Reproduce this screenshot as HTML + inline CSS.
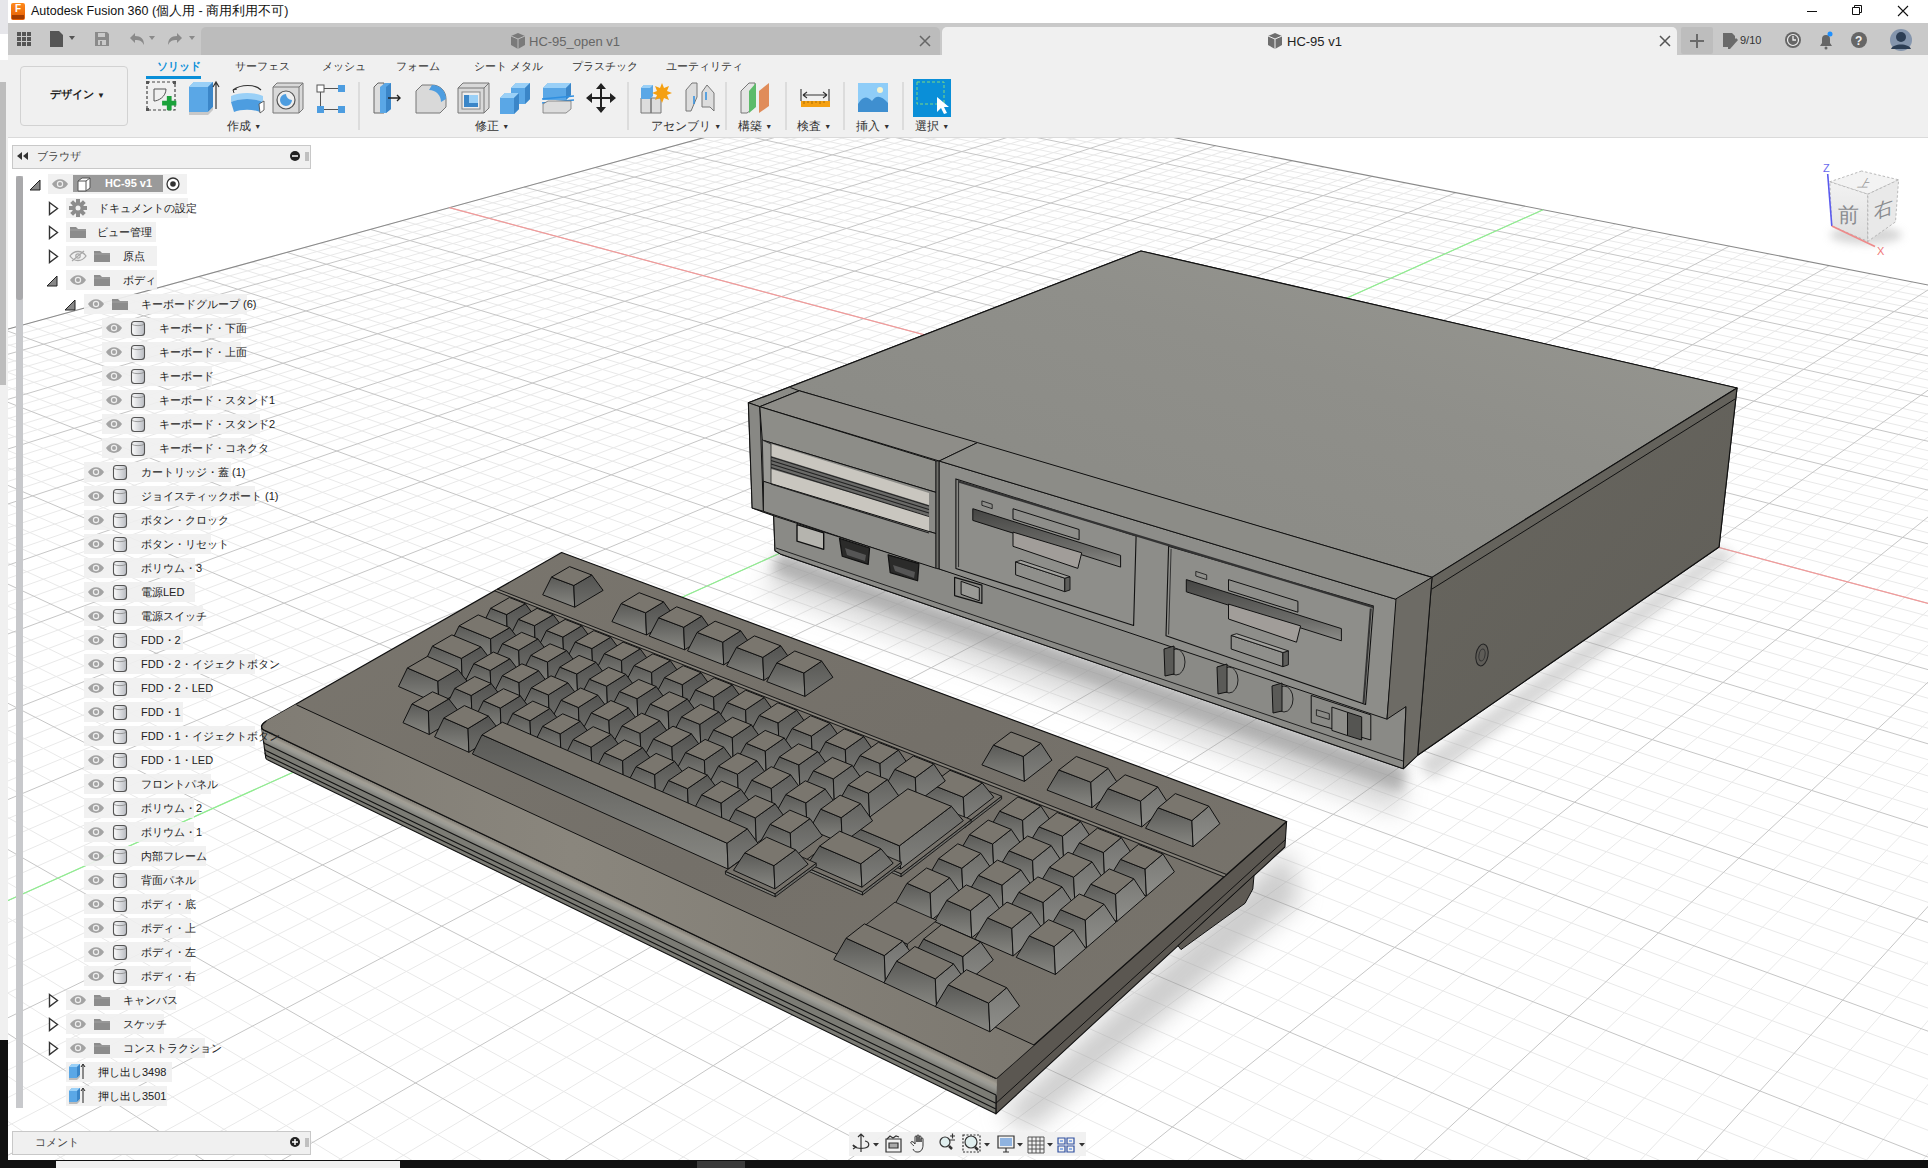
<!DOCTYPE html><html><head><meta charset="utf-8"><style>html,body{margin:0;padding:0;width:1928px;height:1168px;overflow:hidden;background:#fff;position:relative}</style></head><body>
<svg style="position:absolute;left:0;top:0" width="1928" height="1168"><rect x="8" y="137" width="1920" height="1023" fill="#fff"/><path d="M899.4 83.9L-48.8 344.7M912.0 86.4L-49.8 353.4M924.8 88.9L-49.7 361.8M950.5 93.9L-49.3 379.2M963.5 96.4L-49.1 388.2M976.6 99.0L-48.9 397.3M989.8 101.6L-48.7 406.6M1016.5 106.8L-49.7 426.1M1030.0 109.4L-49.5 436.0M1043.7 112.1L-49.3 446.0M1057.4 114.8L-49.1 456.3M1085.1 120.2L-48.7 477.4M1099.2 122.9L-49.9 488.7M1113.4 125.7L-49.7 499.9M1127.6 128.5L-49.5 511.2M1156.5 134.1L-49.1 534.7M1171.1 137.0L-48.9 546.8M1185.9 139.9L-48.7 559.2M1200.7 142.8L-50.0 572.4M1230.8 148.7L-49.6 598.6M1246.0 151.6L-49.3 612.2M1261.4 154.6L-49.1 626.0M1276.8 157.7L-48.9 640.3M1308.2 163.8L-48.4 669.7M1324.0 166.9L-49.8 685.6M1340.0 170.0L-49.6 701.3M1356.2 173.2L-49.3 717.4M1388.8 179.5L-48.8 750.7M1405.4 182.8L-48.6 768.1M1422.1 186.0L-48.3 785.9M1438.9 189.3L-49.9 804.9M1473.0 196.0L-49.4 843.0M1490.3 199.4L-49.1 862.9M1507.7 202.8L-48.8 883.3M1525.3 206.2L-48.5 904.3M1560.9 213.2L-50.0 949.1M1579.0 216.7L-49.7 972.1M1597.2 220.3L-49.4 995.8M1615.6 223.9L-49.1 1020.2M1652.9 231.1L-48.4 1071.4M1671.8 234.8L-48.1 1098.2M1690.8 238.6L-47.7 1125.9M1710.0 242.3L-49.7 1155.8M1749.1 249.9L-49.1 1216.2M1768.8 253.8L4.9 1218.7M1788.8 257.7L61.3 1219.9M1809.0 261.6L120.2 1219.8M1849.8 269.6L237.8 1219.5M1870.6 273.7L296.6 1219.4M1891.5 277.8L355.4 1219.3M1912.6 281.9L414.2 1219.2M1955.5 290.3L531.7 1218.9M1977.3 294.5L590.4 1218.8M1979.9 312.0L647.2 1220.0M1979.8 332.2L706.0 1219.9M1979.6 375.4L823.5 1219.6M1979.5 398.6L882.2 1219.5M1979.9 422.6L940.9 1219.4M1979.8 448.2L999.5 1219.3M1979.5 503.6L1116.9 1219.0M1980.0 533.2L1175.5 1218.9M1979.8 564.9L1234.1 1218.8M1979.7 598.5L1291.3 1220.0M1979.4 672.1L1408.6 1219.7M1979.9 711.8L1467.2 1219.6M1979.8 754.8L1525.8 1219.5M1979.6 800.8L1584.4 1219.4M1979.3 903.1L1701.6 1219.1M1979.9 959.3L1760.1 1219.0M1979.7 1020.9L1818.7 1218.9M1979.5 1087.7L1877.2 1218.7M-49.9 1177.6L8.7 1219.8M-48.9 1129.1L80.3 1219.7M-49.4 1082.3L151.8 1219.5M-49.9 1038.0L223.3 1219.3M-49.5 956.9L366.2 1219.0M-50.0 919.0L439.5 1219.9M-49.1 883.6L510.9 1219.7M-49.6 849.1L582.4 1219.5M-49.2 785.6L725.2 1219.2M-49.6 755.6L796.6 1219.0M-48.9 727.5L870.0 1219.9M-49.3 699.9L941.4 1219.8M-49.0 648.8L1084.0 1219.4M-49.4 624.4L1155.3 1219.2M-49.7 601.1L1226.6 1219.0M-49.1 579.1L1300.2 1220.0M-49.8 536.6L1442.8 1219.6M-49.2 516.9L1514.0 1219.4M-49.5 497.5L1585.2 1219.3M-49.8 478.7L1656.4 1219.1M-49.5 443.6L1801.4 1219.8M-49.8 426.7L1872.6 1219.7M-49.3 410.7L1943.7 1219.5M-49.6 394.8L1979.1 1205.0M-49.3 364.9L1978.4 1149.8M-49.6 350.5L1978.1 1123.5M-36.9 341.5L1977.8 1097.9M-15.9 335.7L1977.5 1073.2M25.3 324.4L1979.4 1026.6M45.5 318.8L1979.1 1003.9M65.4 313.3L1978.7 981.8M85.1 307.9L1978.5 960.3M123.8 297.3L1977.9 919.1M142.8 292.0L1979.9 900.1M161.6 286.9L1979.6 880.8M180.1 281.8L1979.3 862.0M216.6 271.8L1978.7 825.8M234.4 266.8L1978.5 808.4M252.1 262.0L1978.2 791.4M269.6 257.2L1977.9 774.9M304.0 247.7L1979.5 743.5M320.9 243.1L1979.2 728.1M337.6 238.5L1979.0 713.0M354.1 233.9L1978.7 698.3M386.5 225.0L1978.2 669.9M402.5 220.6L1979.9 656.6M418.3 216.3L1979.6 643.2M433.9 212.0L1979.4 630.0M464.6 203.5L1978.9 604.5M479.8 199.4L1978.7 592.1M494.7 195.2L1978.5 580.1M509.5 191.2L1978.3 568.2M538.6 183.2L1979.6 545.7M553.0 179.2L1979.3 534.5M567.1 175.3L1979.1 523.6M581.2 171.5L1978.9 512.9M608.8 163.9L1978.5 492.1M622.4 160.1L1979.9 482.3M635.9 156.4L1979.7 472.4M649.2 152.7L1979.5 462.7M675.5 145.5L1979.1 443.7M688.4 142.0L1978.9 434.5M701.2 138.4L1978.7 425.5M713.9 134.9L1978.5 416.6M738.9 128.1L1979.6 399.6M751.2 124.7L1979.4 391.2M763.4 121.3L1979.2 382.9M775.5 118.0L1979.0 374.7M799.3 111.5L1978.7 358.8M811.0 108.2L1979.9 351.4M822.7 105.0L1979.7 343.8M834.2 101.9L1979.5 336.3M856.9 95.6L1979.2 321.6M868.1 92.5L1979.0 314.5M879.2 89.5L1978.8 307.5M890.2 86.5L1978.7 300.6" stroke="#e9e9e9" stroke-width="1" fill="none"/>
<path d="M937.6 91.4L-49.5 370.5M1003.1 104.2L-49.9 416.5M1071.2 117.5L-48.9 466.7M1142.0 131.3L-49.3 522.8M1215.7 145.7L-49.8 585.3M1292.4 160.7L-48.6 654.8M1372.4 176.3L-49.1 733.8M1455.9 192.6L-49.6 823.7M1543.1 209.7L-48.2 925.9M1634.1 227.5L-48.8 1045.4M1729.5 246.1L-49.4 1185.5M1829.3 265.6L179.0 1219.7M1934.0 286.1L473.0 1219.0M1979.7 353.3L764.7 1219.7M1979.7 475.2L1058.2 1219.1M1979.6 634.2L1350.0 1219.8M1979.4 850.1L1643.0 1219.2M1979.3 1160.4L1934.7 1219.9M-49.0 996.8L294.8 1219.1M-50.0 816.3L653.8 1219.4M-49.7 673.6L1012.7 1219.6M-49.4 557.4L1371.5 1219.8M-49.2 461.0L1727.6 1218.9M-49.9 379.5L1978.8 1177.0M4.8 330.0L1979.7 1050.0M104.6 302.6L1978.2 939.4M198.4 276.7L1979.0 843.7M286.9 252.4L1979.7 759.3M370.4 229.4L1978.5 683.9M449.4 207.7L1979.2 617.1M524.1 187.1L1979.8 557.0M595.1 167.6L1978.7 502.4M662.4 149.1L1979.3 453.1M726.5 131.5L1979.8 408.2M787.5 114.7L1978.9 366.7M845.6 98.7L1979.4 328.9" stroke="#c6c6c6" stroke-width="1" fill="none"/>
<path d="M899.4 83.9L-48.8 344.7" stroke="#8a8a8a" stroke-width="1.1" fill="none"/>
<path d="M899.4 83.9L1980.0 295.1" stroke="#8a8a8a" stroke-width="1.1" fill="none"/>
<path d="M449.4 207.7L1979.2 617.1" stroke="#f39a9a" stroke-width="1.2" fill="none"/>
<path d="M1543.1 209.7L-48.2 925.9" stroke="#8ef08e" stroke-width="1.2" fill="none"/><defs>
<filter id="blur12" x="-50%" y="-50%" width="200%" height="200%"><feGaussianBlur stdDeviation="12"/></filter>
<filter id="blur6" x="-50%" y="-50%" width="200%" height="200%"><feGaussianBlur stdDeviation="6"/></filter>
<linearGradient id="pctop" x1="0" y1="1" x2="1" y2="0"><stop offset="0" stop-color="#888883"/><stop offset="0.6" stop-color="#8f8f8a"/><stop offset="1" stop-color="#989892"/></linearGradient>
<linearGradient id="pcright" x1="0" y1="0" x2="1" y2="1"><stop offset="0" stop-color="#68665f"/><stop offset="1" stop-color="#605e58"/></linearGradient>
<linearGradient id="slot" x1="0" y1="0" x2="0" y2="1"><stop offset="0" stop-color="#454543"/><stop offset="0.7" stop-color="#6e6e6b"/><stop offset="1" stop-color="#8c8c88"/></linearGradient>
<linearGradient id="kbtop" x1="0" y1="0" x2="1" y2="1"><stop offset="0" stop-color="#7a766e"/><stop offset="0.5" stop-color="#747069"/><stop offset="1" stop-color="#78746c"/></linearGradient>
<linearGradient id="kbpalm" x1="0" y1="0" x2="1" y2="0"><stop offset="0" stop-color="#807c74"/><stop offset="0.4" stop-color="#8a867d"/><stop offset="1" stop-color="#7c7870"/></linearGradient>
<linearGradient id="kf" x1="0" y1="0" x2="0" y2="1"><stop offset="0" stop-color="#5a5a57"/><stop offset="1" stop-color="#878782"/></linearGradient>
<linearGradient id="kr" x1="0" y1="0" x2="0" y2="1"><stop offset="0" stop-color="#535351"/><stop offset="1" stop-color="#6e6e6a"/></linearGradient><linearGradient id="kr0" x1="0" y1="0" x2="0" y2="1"><stop offset="0" stop-color="#535351"/><stop offset="1" stop-color="#6e6e6a"/></linearGradient><linearGradient id="kr1" x1="0" y1="0" x2="0" y2="1"><stop offset="0" stop-color="#595956"/><stop offset="1" stop-color="#73736f"/></linearGradient><linearGradient id="kr2" x1="0" y1="0" x2="0" y2="1"><stop offset="0" stop-color="#5e5e5c"/><stop offset="1" stop-color="#777773"/></linearGradient><linearGradient id="kr3" x1="0" y1="0" x2="0" y2="1"><stop offset="0" stop-color="#646461"/><stop offset="1" stop-color="#7c7c78"/></linearGradient><linearGradient id="kr4" x1="0" y1="0" x2="0" y2="1"><stop offset="0" stop-color="#696966"/><stop offset="1" stop-color="#80807c"/></linearGradient><linearGradient id="kr5" x1="0" y1="0" x2="0" y2="1"><stop offset="0" stop-color="#6f6f6b"/><stop offset="1" stop-color="#858581"/></linearGradient><linearGradient id="kr6" x1="0" y1="0" x2="0" y2="1"><stop offset="0" stop-color="#747471"/><stop offset="1" stop-color="#898985"/></linearGradient><linearGradient id="kr7" x1="0" y1="0" x2="0" y2="1"><stop offset="0" stop-color="#7a7a76"/><stop offset="1" stop-color="#8e8e8a"/></linearGradient>
<linearGradient id="fillet" x1="0" y1="0" x2="0" y2="1"><stop offset="0" stop-color="#8a867d"/><stop offset="0.45" stop-color="#a29e95"/><stop offset="1" stop-color="#7d7d76"/></linearGradient>
</defs><polygon points="780.0,552.0 1406.0,768.0 1402.0,792.0 772.0,572.0" fill="#8a8a8a" filter="url(#blur6)" opacity="0.6"/>
<polygon points="780.0,556.0 1406.0,771.0 1400.0,815.0 765.0,590.0" fill="#a0a0a0" filter="url(#blur12)" opacity="0.4"/>
<polygon points="1418.0,762.0 1719.0,547.0 1735.0,555.0 1432.0,780.0" fill="#a8a8a8" filter="url(#blur6)" opacity="0.45"/>
<polygon points="1000.0,1115.0 1289.0,848.0 1300.0,900.0 1030.0,1130.0" fill="#999" filter="url(#blur12)" opacity="0.5"/><polygon points="748.4,402.8 1141.0,251.0 1737.0,388.0 1719.0,547.0 1417.6,755.2 1403.3,768.7 780.6,554.1 775.0,550.7 773.7,515.8 752.2,508.0" fill="#8b8b86" stroke="#111" stroke-width="1.2" stroke-linejoin="round" />
<polygon points="748.4,402.8 1141.0,251.0 1737.0,388.0 1432.0,577.4 799.3,390.8 759.8,406.7" fill="url(#pctop)" stroke="#111" stroke-width="1.1" stroke-linejoin="round" />
<polygon points="1432.0,577.4 1737.0,388.0 1719.0,547.0 1417.6,755.2" fill="url(#pcright)" stroke="#111" stroke-width="1.1" stroke-linejoin="round" />
<line x1="1432.0" y1="589.0" x2="1735.0" y2="399.0" stroke="#111" stroke-width="1.0"/>
<ellipse cx="1482" cy="655" rx="6" ry="11" fill="#5e5c57" stroke="#222" stroke-width="1" transform="rotate(10 1482 655)"/>
<ellipse cx="1482" cy="655" rx="3" ry="6" fill="none" stroke="#333" stroke-width="1" transform="rotate(10 1482 655)"/>
<polygon points="748.4,402.8 759.8,406.7 763.4,511.3 752.2,508.0" fill="#888884" stroke="#111" stroke-width="1" stroke-linejoin="round" />
<line x1="790.3" y1="387.5" x2="799.3" y2="390.8" stroke="#111" stroke-width="1.0"/>
<polygon points="759.8,406.7 799.3,390.8 977.5,442.6 939.2,461.0" fill="#8e8d88" stroke="#111" stroke-width="1" stroke-linejoin="round" />
<polygon points="759.8,406.7 936.0,461.0 936.0,492.4 762.3,440.1" fill="#8d8d88" stroke="#111" stroke-width="1" stroke-linejoin="round" />
<polygon points="762.3,440.1 936.0,492.4 936.0,533.6 763.4,481.3" fill="#8a8a86" stroke="#111" stroke-width="1" stroke-linejoin="round" />
<polygon points="771.0,444.0 929.0,493.0 929.0,533.0 771.0,484.0" fill="#c9c6bf" />
<polygon points="771.0,456.0 929.0,505.0 929.0,516.0 771.0,469.0" fill="#6a6a68" />
<line x1="771.0" y1="457.0" x2="929.0" y2="506.0" stroke="#222" stroke-width="1.1"/>
<line x1="771.0" y1="460.5" x2="929.0" y2="509.5" stroke="#222" stroke-width="1.1"/>
<line x1="771.0" y1="464.0" x2="929.0" y2="513.0" stroke="#222" stroke-width="1.1"/>
<line x1="771.0" y1="467.5" x2="929.0" y2="516.5" stroke="#222" stroke-width="1.1"/>
<polygon points="762.3,440.1 771.0,444.0 771.0,484.0 763.4,481.3" fill="#9a9a96" stroke="#222" stroke-width="0.8" stroke-linejoin="round" />
<polygon points="763.4,481.3 936.0,533.6 936.0,569.0 763.4,511.3" fill="#8c8c88" stroke="#111" stroke-width="1" stroke-linejoin="round" />
<line x1="771.0" y1="484.0" x2="929.0" y2="533.0" stroke="#222" stroke-width="1.2"/>
<polygon points="936.0,461.0 939.2,461.0 939.2,569.0 936.0,569.0" fill="#6e6e6a" stroke="#111" stroke-width="0.8" stroke-linejoin="round" />
<polygon points="773.7,515.8 936.7,568.5 939.2,569.0 1406.0,706.6 1403.3,768.7 780.6,554.1 775.0,550.7" fill="#8a8a86" stroke="#111" stroke-width="1" stroke-linejoin="round" />
<line x1="776.0" y1="548.0" x2="1403.0" y2="761.0" stroke="#222" stroke-width="1.0"/>
<polygon points="797.0,524.7 823.7,532.9 823.7,549.3 797.0,541.1" fill="#b5b4ae" stroke="#111" stroke-width="1.4" stroke-linejoin="round" />
<polygon points="839.5,538.4 869.6,548.0 868.2,564.4 842.2,556.2" fill="#2b2b2a" stroke="#111" stroke-width="1.2" stroke-linejoin="round" />
<polygon points="845.0,548.0 866.0,555.0 865.0,561.0 847.0,555.0" fill="#555" />
<polygon points="888.1,554.8 918.9,563.6 917.6,580.8 890.2,572.6" fill="#2b2b2a" stroke="#111" stroke-width="1.2" stroke-linejoin="round" />
<polygon points="893.0,565.0 915.0,572.0 914.0,578.0 895.0,571.0" fill="#555" />
<polygon points="939.2,461.0 1396.7,599.5 1387.0,719.2 939.2,569.0" fill="#8d8d89" stroke="#111" stroke-width="1" stroke-linejoin="round" />
<polygon points="977.5,442.6 1432.0,577.4 1396.7,599.5 939.2,461.0" fill="#8c8c87" stroke="#111" stroke-width="1" stroke-linejoin="round" />
<polygon points="1396.0,598.8 1432.0,577.4 1417.6,755.2 1403.3,768.7 1406.0,706.6 1387.0,719.2" fill="#6d6b65" stroke="#111" stroke-width="1" stroke-linejoin="round" />
<polygon points="955.9,478.9 1136.1,535.9 1133.6,625.4 955.9,568.4" fill="#8e8e8a" stroke="#111" stroke-width="1.1" stroke-linejoin="round" />
<polygon points="1168.6,546.3 1373.4,606.0 1365.6,704.5 1166.0,635.8" fill="#8e8e8a" stroke="#111" stroke-width="1.1" stroke-linejoin="round" />
<line x1="958.5" y1="481.5" x2="1373.4" y2="607.2" stroke="#333" stroke-width="2.2"/>
<line x1="958.5" y1="478.9" x2="958.5" y2="567.1" stroke="#333" stroke-width="1.2"/>
<line x1="1171.1" y1="548.9" x2="1168.6" y2="634.5" stroke="#333" stroke-width="1.0"/>
<line x1="1370.8" y1="608.5" x2="1363.5" y2="703.2" stroke="#333" stroke-width="2.0"/>
<polygon points="981.9,500.9 992.2,504.3 992.2,508.7 981.9,505.3" fill="#8e8e8a" stroke="#111" stroke-width="0.8" stroke-linejoin="round" />
<polygon points="972.8,508.7 1120.6,555.4 1120.6,567.1 972.8,520.4" fill="url(#slot)" stroke="#111" stroke-width="1" stroke-linejoin="round" />
<polygon points="1013.0,508.7 1079.1,529.5 1079.1,539.8 1013.0,519.1" fill="#8e8e8a" stroke="#111" stroke-width="1" stroke-linejoin="round" />
<polygon points="1013.0,532.1 1081.7,552.8 1077.8,568.4 1013.0,546.3" fill="#a19d99" stroke="#111" stroke-width="1" stroke-linejoin="round" />
<polygon points="1015.6,561.9 1064.8,578.2 1064.8,591.7 1015.6,574.8" fill="#8f8f8b" stroke="#111" stroke-width="1" stroke-linejoin="round" />
<polygon points="1064.8,578.2 1070.0,576.7 1070.0,589.9 1064.8,591.7" fill="#5e5e5b" stroke="#111" stroke-width="0.9" stroke-linejoin="round" />
<polygon points="1015.6,561.9 1020.8,560.3 1070.0,576.7 1064.8,578.2" fill="#a2a29e" stroke="#111" stroke-width="0.9" stroke-linejoin="round" />
<polygon points="1195.8,571.4 1206.7,574.9 1206.7,579.6 1195.8,576.0" fill="#8e8e8a" stroke="#111" stroke-width="0.8" stroke-linejoin="round" />
<polygon points="1186.3,579.6 1341.4,628.6 1341.4,640.8 1186.3,591.8" fill="url(#slot)" stroke="#111" stroke-width="1" stroke-linejoin="round" />
<polygon points="1228.5,579.6 1297.9,601.3 1297.9,612.2 1228.5,590.5" fill="#8e8e8a" stroke="#111" stroke-width="1" stroke-linejoin="round" />
<polygon points="1228.5,604.1 1300.6,625.9 1296.5,642.2 1228.5,619.0" fill="#a19d99" stroke="#111" stroke-width="1" stroke-linejoin="round" />
<polygon points="1231.2,635.4 1282.9,652.5 1282.9,666.7 1231.2,649.0" fill="#8f8f8b" stroke="#111" stroke-width="1" stroke-linejoin="round" />
<polygon points="1282.9,652.5 1288.4,650.9 1288.4,664.8 1282.9,666.7" fill="#5e5e5b" stroke="#111" stroke-width="0.9" stroke-linejoin="round" />
<polygon points="1231.2,635.4 1236.6,633.7 1288.4,650.9 1282.9,652.5" fill="#a2a29e" stroke="#111" stroke-width="0.9" stroke-linejoin="round" />
<ellipse cx="1176" cy="662" rx="9" ry="13" fill="#8a8a86" stroke="#222" stroke-width="1"/>
<polygon points="1164.0,649.0 1174.0,646.0 1174.0,674.0 1165.0,676.0" fill="#5a5a57" stroke="#111" stroke-width="1" stroke-linejoin="round" />
<ellipse cx="1229" cy="680" rx="9" ry="13" fill="#8a8a86" stroke="#222" stroke-width="1"/>
<polygon points="1217.0,667.0 1227.0,664.0 1227.0,692.0 1218.0,694.0" fill="#5a5a57" stroke="#111" stroke-width="1" stroke-linejoin="round" />
<ellipse cx="1284" cy="699" rx="9" ry="13" fill="#8a8a86" stroke="#222" stroke-width="1"/>
<polygon points="1272.0,686.0 1282.0,683.0 1282.0,711.0 1273.0,713.0" fill="#5a5a57" stroke="#111" stroke-width="1" stroke-linejoin="round" />
<polygon points="954.6,577.4 981.9,585.2 981.9,603.4 954.6,595.6" fill="#8a8a86" stroke="#111" stroke-width="1.2" stroke-linejoin="round" />
<polygon points="961.1,581.3 979.3,587.8 979.3,600.8 961.1,594.3" fill="#9a9a96" stroke="#111" stroke-width="1" stroke-linejoin="round" />
<polygon points="1311.2,695.4 1370.8,714.9 1370.8,740.0 1311.2,722.6" fill="#8a8a86" stroke="#111" stroke-width="1" stroke-linejoin="round" />
<polygon points="1316.4,709.7 1329.3,713.6 1329.3,719.5 1316.4,715.6" fill="#8a8a86" stroke="#111" stroke-width="0.8" stroke-linejoin="round" />
<polygon points="1331.9,707.1 1347.5,712.3 1347.5,735.6 1331.9,730.4" fill="#8e8e8a" stroke="#111" stroke-width="1" stroke-linejoin="round" />
<polygon points="1347.5,712.3 1361.7,716.9 1361.7,740.0 1347.5,735.6" fill="#555552" stroke="#111" stroke-width="1" stroke-linejoin="round" /><polygon points="996.1,1078.5 1286.6,821.5 1284.9,847.0 995.9,1113.8" fill="#5b5751" stroke="#111" stroke-width="1.1" stroke-linejoin="round" />
<line x1="995.9" y1="1103.3" x2="1285.4" y2="839.6" stroke="#111" stroke-width="1.0"/>
<polygon points="1254.0,875.5 1252.8,889.0 1245.0,903.3 1181.0,949.6 1178.0,945.7" fill="#5e5a54" stroke="#111" stroke-width="1" stroke-linejoin="round" />
<polygon points="261.5,726.6 261.6,727.6 262.1,728.6 262.8,729.4 264.0,730.1 996.1,1078.5 995.9,1113.8 268.0,760.1 266.9,759.4 266.1,758.6 265.7,757.7 265.6,756.8" fill="#7b7b74" stroke="#111" stroke-width="1.1" stroke-linejoin="round" />
<polygon points="261.5,726.6 261.6,727.6 262.1,728.6 262.8,729.4 264.0,730.1 996.1,1078.5 996.0,1095.0 265.8,744.1 264.7,743.4 263.9,742.6 263.5,741.8 263.5,740.8" fill="#86827a" />
<linearGradient id="fg0" gradientUnits="userSpaceOnUse" x1="288.8" y1="741.9" x2="283.6" y2="752.7"><stop offset="0" stop-color="#7e7a72"/><stop offset="0.35" stop-color="#a29e94"/><stop offset="0.6" stop-color="#9a9a94"/><stop offset="1" stop-color="#7a7a74"/></linearGradient>
<polygon points="264.0,730.1 313.5,753.7 315.3,767.9 265.8,744.1" fill="url(#fg0)" />
<linearGradient id="fg1" gradientUnits="userSpaceOnUse" x1="338.7" y1="765.7" x2="333.5" y2="776.6"><stop offset="0" stop-color="#7e7a72"/><stop offset="0.35" stop-color="#a29e94"/><stop offset="0.6" stop-color="#9a9a94"/><stop offset="1" stop-color="#7a7a74"/></linearGradient>
<polygon points="313.0,753.4 364.4,777.9 366.0,792.2 314.8,767.6" fill="url(#fg1)" />
<linearGradient id="fg2" gradientUnits="userSpaceOnUse" x1="390.5" y1="790.3" x2="385.1" y2="801.4"><stop offset="0" stop-color="#7e7a72"/><stop offset="0.35" stop-color="#a29e94"/><stop offset="0.6" stop-color="#9a9a94"/><stop offset="1" stop-color="#7a7a74"/></linearGradient>
<polygon points="363.8,777.6 417.1,803.0 418.6,817.5 365.5,792.0" fill="url(#fg2)" />
<linearGradient id="fg3" gradientUnits="userSpaceOnUse" x1="444.2" y1="815.8" x2="438.7" y2="827.2"><stop offset="0" stop-color="#7e7a72"/><stop offset="0.35" stop-color="#a29e94"/><stop offset="0.6" stop-color="#9a9a94"/><stop offset="1" stop-color="#7a7a74"/></linearGradient>
<polygon points="416.5,802.7 471.8,829.0 473.2,843.7 418.1,817.2" fill="url(#fg3)" />
<linearGradient id="fg4" gradientUnits="userSpaceOnUse" x1="499.9" y1="842.4" x2="494.4" y2="854.0"><stop offset="0" stop-color="#7e7a72"/><stop offset="0.35" stop-color="#a29e94"/><stop offset="0.6" stop-color="#9a9a94"/><stop offset="1" stop-color="#7a7a74"/></linearGradient>
<polygon points="471.2,828.7 528.6,856.0 529.9,871.0 472.6,843.4" fill="url(#fg4)" />
<linearGradient id="fg5" gradientUnits="userSpaceOnUse" x1="557.8" y1="869.9" x2="552.2" y2="881.7"><stop offset="0" stop-color="#7e7a72"/><stop offset="0.35" stop-color="#a29e94"/><stop offset="0.6" stop-color="#9a9a94"/><stop offset="1" stop-color="#7a7a74"/></linearGradient>
<polygon points="528.0,855.7 587.6,884.1 588.8,899.3 529.3,870.7" fill="url(#fg5)" />
<linearGradient id="fg6" gradientUnits="userSpaceOnUse" x1="618.0" y1="898.6" x2="612.3" y2="910.6"><stop offset="0" stop-color="#7e7a72"/><stop offset="0.35" stop-color="#a29e94"/><stop offset="0.6" stop-color="#9a9a94"/><stop offset="1" stop-color="#7a7a74"/></linearGradient>
<polygon points="587.0,883.8 649.0,913.3 650.0,928.7 588.1,899.0" fill="url(#fg6)" />
<linearGradient id="fg7" gradientUnits="userSpaceOnUse" x1="680.7" y1="928.4" x2="674.8" y2="940.7"><stop offset="0" stop-color="#7e7a72"/><stop offset="0.35" stop-color="#a29e94"/><stop offset="0.6" stop-color="#9a9a94"/><stop offset="1" stop-color="#7a7a74"/></linearGradient>
<polygon points="648.4,913.0 712.9,943.7 713.7,959.3 649.3,928.4" fill="url(#fg7)" />
<linearGradient id="fg8" gradientUnits="userSpaceOnUse" x1="745.9" y1="959.4" x2="739.9" y2="971.9"><stop offset="0" stop-color="#7e7a72"/><stop offset="0.35" stop-color="#a29e94"/><stop offset="0.6" stop-color="#9a9a94"/><stop offset="1" stop-color="#7a7a74"/></linearGradient>
<polygon points="712.2,943.4 779.5,975.4 780.1,991.2 713.0,959.0" fill="url(#fg8)" />
<linearGradient id="fg9" gradientUnits="userSpaceOnUse" x1="813.8" y1="991.8" x2="807.8" y2="1004.6"><stop offset="0" stop-color="#7e7a72"/><stop offset="0.35" stop-color="#a29e94"/><stop offset="0.6" stop-color="#9a9a94"/><stop offset="1" stop-color="#7a7a74"/></linearGradient>
<polygon points="778.8,975.1 848.9,1008.4 849.3,1024.5 779.4,990.9" fill="url(#fg9)" />
<linearGradient id="fg10" gradientUnits="userSpaceOnUse" x1="884.7" y1="1025.5" x2="878.5" y2="1038.6"><stop offset="0" stop-color="#7e7a72"/><stop offset="0.35" stop-color="#a29e94"/><stop offset="0.6" stop-color="#9a9a94"/><stop offset="1" stop-color="#7a7a74"/></linearGradient>
<polygon points="848.1,1008.1 921.3,1042.9 921.5,1059.2 848.5,1024.1" fill="url(#fg10)" />
<linearGradient id="fg11" gradientUnits="userSpaceOnUse" x1="958.7" y1="1060.7" x2="952.4" y2="1074.1"><stop offset="0" stop-color="#7e7a72"/><stop offset="0.35" stop-color="#a29e94"/><stop offset="0.6" stop-color="#9a9a94"/><stop offset="1" stop-color="#7a7a74"/></linearGradient>
<polygon points="920.5,1042.5 997.0,1078.9 996.8,1095.4 920.7,1058.8" fill="url(#fg11)" />
<polyline points="263.5,740.8 263.5,741.8 263.9,742.6 264.7,743.4 265.8,744.1 996.0,1095.0" fill="none" stroke="#111" stroke-width="1.1"/>
<polyline points="264.4,747.8 264.5,748.8 264.9,749.6 265.7,750.4 266.8,751.1 995.9,1103.3" fill="none" stroke="#111" stroke-width="1.1"/>
<polyline points="265.0,752.6 265.1,753.5 265.5,754.4 266.3,755.2 267.4,755.9 995.9,1108.9" fill="none" stroke="#111" stroke-width="1.1"/>
<polygon points="266.3,721.1 264.8,722.1 263.5,723.2 262.5,724.3 261.8,725.5 261.5,726.6 261.6,727.6 262.1,728.6 262.8,729.4 264.0,730.1 996.1,1078.5 1286.6,821.5 561.6,552.5" fill="url(#kbtop)" stroke="#111" stroke-width="1.2" stroke-linejoin="round" />
<polygon points="264.0,730.1 996.1,1078.5 1034.0,1045.0 295.6,704.4 266.3,721.1" fill="url(#kbpalm)" />
<line x1="296.6" y1="704.9" x2="1034.0" y2="1045.0" stroke="#111" stroke-width="1.0"/>
<polyline points="266.3,721.1 264.8,722.1 263.5,723.2 262.5,724.3 261.8,725.5 261.5,726.6 261.6,727.6 262.1,728.6 262.8,729.4 264.0,730.1 996.1,1078.5" fill="none" stroke="#111" stroke-width="1.1"/>
<line x1="497.4" y1="589.1" x2="1226.7" y2="874.5" stroke="#1a1a1a" stroke-width="1.0"/>
<line x1="495.9" y1="590.0" x2="1225.2" y2="875.7" stroke="#8c887f" stroke-width="1.0"/>
<line x1="494.5" y1="590.8" x2="1223.9" y2="876.9" stroke="#1a1a1a" stroke-width="1.0"/><polygon points="542.7,594.8 574.7,607.2 573.8,585.5 551.5,577.1" fill="url(#kf)" stroke="#111" stroke-width="1" stroke-linejoin="round" />
<polygon points="574.7,607.2 603.1,590.4 591.8,575.0 573.8,585.5" fill="url(#kr0)" stroke="#111" stroke-width="1" stroke-linejoin="round" />
<polygon points="551.5,577.1 573.8,585.5 591.8,575.0 569.6,566.6" fill="#7a766e" stroke="#111" stroke-width="1" stroke-linejoin="round" />
<polygon points="611.9,621.6 646.5,635.0 645.6,612.8 621.2,603.5" fill="url(#kf)" stroke="#111" stroke-width="1" stroke-linejoin="round" />
<polygon points="646.5,635.0 674.8,617.5 663.6,601.9 645.6,612.8" fill="url(#kr0)" stroke="#111" stroke-width="1" stroke-linejoin="round" />
<polygon points="621.2,603.5 645.6,612.8 663.6,601.9 639.2,592.7" fill="#7a766e" stroke="#111" stroke-width="1" stroke-linejoin="round" />
<polygon points="649.2,636.1 684.6,649.8 683.7,627.3 658.7,617.8" fill="url(#kf)" stroke="#111" stroke-width="1" stroke-linejoin="round" />
<polygon points="684.6,649.8 712.9,631.9 701.7,616.1 683.7,627.3" fill="url(#kr0)" stroke="#111" stroke-width="1" stroke-linejoin="round" />
<polygon points="658.7,617.8 683.7,627.3 701.7,616.1 676.7,606.8" fill="#7a766e" stroke="#111" stroke-width="1" stroke-linejoin="round" />
<polygon points="687.5,650.9 723.7,664.9 722.8,642.2 697.1,632.4" fill="url(#kf)" stroke="#111" stroke-width="1" stroke-linejoin="round" />
<polygon points="723.7,664.9 752.0,646.7 740.7,630.8 722.8,642.2" fill="url(#kr0)" stroke="#111" stroke-width="1" stroke-linejoin="round" />
<polygon points="697.1,632.4 722.8,642.2 740.7,630.8 715.1,621.2" fill="#7a766e" stroke="#111" stroke-width="1" stroke-linejoin="round" />
<polygon points="726.6,666.0 763.8,680.4 762.8,657.4 736.5,647.4" fill="url(#kf)" stroke="#111" stroke-width="1" stroke-linejoin="round" />
<polygon points="763.8,680.4 792.0,661.8 780.7,645.8 762.8,657.4" fill="url(#kr0)" stroke="#111" stroke-width="1" stroke-linejoin="round" />
<polygon points="736.5,647.4 762.8,657.4 780.7,645.8 754.4,635.9" fill="#7a766e" stroke="#111" stroke-width="1" stroke-linejoin="round" />
<polygon points="766.7,681.6 804.9,696.4 803.9,673.0 776.9,662.8" fill="url(#kf)" stroke="#111" stroke-width="1" stroke-linejoin="round" />
<polygon points="804.9,696.4 832.9,677.3 821.7,661.1 803.9,673.0" fill="url(#kr1)" stroke="#111" stroke-width="1" stroke-linejoin="round" />
<polygon points="776.9,662.8 803.9,673.0 821.7,661.1 794.8,651.0" fill="#7a766e" stroke="#111" stroke-width="1" stroke-linejoin="round" />
<polygon points="981.9,764.9 1024.4,781.4 1023.3,756.5 993.5,745.1" fill="url(#kf)" stroke="#111" stroke-width="1" stroke-linejoin="round" />
<polygon points="1024.4,781.4 1051.9,760.2 1040.8,743.2 1023.3,756.5" fill="url(#kr4)" stroke="#111" stroke-width="1" stroke-linejoin="round" />
<polygon points="993.5,745.1 1023.3,756.5 1040.8,743.2 1011.0,732.0" fill="#7a766e" stroke="#111" stroke-width="1" stroke-linejoin="round" />
<polygon points="1047.0,790.1 1092.0,807.6 1090.8,782.2 1058.9,770.0" fill="url(#kf)" stroke="#111" stroke-width="1" stroke-linejoin="round" />
<polygon points="1092.0,807.6 1119.2,785.6 1108.1,768.4 1090.8,782.2" fill="url(#kr5)" stroke="#111" stroke-width="1" stroke-linejoin="round" />
<polygon points="1058.9,770.0 1090.8,782.2 1108.1,768.4 1076.3,756.5" fill="#7a766e" stroke="#111" stroke-width="1" stroke-linejoin="round" />
<polygon points="1095.6,808.9 1141.8,826.9 1140.6,801.1 1107.9,788.6" fill="url(#kf)" stroke="#111" stroke-width="1" stroke-linejoin="round" />
<polygon points="1141.8,826.9 1168.8,804.4 1157.8,787.0 1140.6,801.1" fill="url(#kr6)" stroke="#111" stroke-width="1" stroke-linejoin="round" />
<polygon points="1107.9,788.6 1140.6,801.1 1157.8,787.0 1125.1,774.8" fill="#7a766e" stroke="#111" stroke-width="1" stroke-linejoin="round" />
<polygon points="1145.5,828.3 1193.1,846.7 1191.9,820.6 1158.2,807.8" fill="url(#kf)" stroke="#111" stroke-width="1" stroke-linejoin="round" />
<polygon points="1193.1,846.7 1219.9,823.7 1208.9,806.2 1191.9,820.6" fill="url(#kr7)" stroke="#111" stroke-width="1" stroke-linejoin="round" />
<polygon points="1158.2,807.8 1191.9,820.6 1208.9,806.2 1175.3,793.6" fill="#7a766e" stroke="#111" stroke-width="1" stroke-linejoin="round" />
<polygon points="911.7,805.4 965.2,827.2 965.2,824.3 911.7,802.5" fill="#7d7d78" stroke="#111" stroke-width="0.9" stroke-linejoin="round" />
<polygon points="965.2,827.2 1001.6,799.1 1001.6,796.2 965.2,824.3" fill="#6a6a66" stroke="#111" stroke-width="0.9" stroke-linejoin="round" />
<polygon points="911.7,802.5 965.2,824.3 1001.6,796.2 948.3,775.2" fill="#76726b" stroke="#111" stroke-width="0.9" stroke-linejoin="round" />
<polygon points="919.5,801.5 964.5,819.8 963.3,797.2 931.1,784.4" fill="url(#kf)" stroke="#111" stroke-width="1" stroke-linejoin="round" />
<polygon points="964.5,819.8 993.8,797.2 982.2,782.9 963.3,797.2" fill="url(#kr4)" stroke="#111" stroke-width="1" stroke-linejoin="round" />
<polygon points="931.1,784.4 963.3,797.2 982.2,782.9 950.0,770.3" fill="#7a766e" stroke="#111" stroke-width="1" stroke-linejoin="round" />
<polygon points="481.9,626.3 507.4,636.6 506.6,614.6 490.7,608.3" fill="url(#kf)" stroke="#111" stroke-width="1" stroke-linejoin="round" />
<polygon points="507.4,636.6 536.9,619.2 525.3,603.7 506.6,614.6" fill="url(#kr0)" stroke="#111" stroke-width="1" stroke-linejoin="round" />
<polygon points="490.7,608.3 506.6,614.6 525.3,603.7 509.5,597.5" fill="#7a766e" stroke="#111" stroke-width="1" stroke-linejoin="round" />
<polygon points="509.4,637.4 535.3,648.0 534.5,625.7 518.4,619.3" fill="url(#kf)" stroke="#111" stroke-width="1" stroke-linejoin="round" />
<polygon points="535.3,648.0 564.9,630.3 553.2,614.7 534.5,625.7" fill="url(#kr0)" stroke="#111" stroke-width="1" stroke-linejoin="round" />
<polygon points="518.4,619.3 534.5,625.7 553.2,614.7 537.1,608.3" fill="#7a766e" stroke="#111" stroke-width="1" stroke-linejoin="round" />
<polygon points="537.4,648.8 563.8,659.5 562.9,637.1 546.5,630.5" fill="url(#kf)" stroke="#111" stroke-width="1" stroke-linejoin="round" />
<polygon points="563.8,659.5 593.3,641.6 581.7,625.8 562.9,637.1" fill="url(#kr0)" stroke="#111" stroke-width="1" stroke-linejoin="round" />
<polygon points="546.5,630.5 562.9,637.1 581.7,625.8 565.2,619.4" fill="#7a766e" stroke="#111" stroke-width="1" stroke-linejoin="round" />
<polygon points="565.9,660.4 592.8,671.3 591.9,648.6 575.2,642.0" fill="url(#kf)" stroke="#111" stroke-width="1" stroke-linejoin="round" />
<polygon points="592.8,671.3 622.3,653.1 610.6,637.2 591.9,648.6" fill="url(#kr0)" stroke="#111" stroke-width="1" stroke-linejoin="round" />
<polygon points="575.2,642.0 591.9,648.6 610.6,637.2 593.9,630.6" fill="#7a766e" stroke="#111" stroke-width="1" stroke-linejoin="round" />
<polygon points="594.9,672.2 622.4,683.3 621.5,660.4 604.4,653.6" fill="url(#kf)" stroke="#111" stroke-width="1" stroke-linejoin="round" />
<polygon points="622.4,683.3 651.8,664.8 640.2,648.8 621.5,660.4" fill="url(#kr0)" stroke="#111" stroke-width="1" stroke-linejoin="round" />
<polygon points="604.4,653.6 621.5,660.4 640.2,648.8 623.1,642.1" fill="#7a766e" stroke="#111" stroke-width="1" stroke-linejoin="round" />
<polygon points="624.5,684.2 652.5,695.5 651.6,672.4 634.2,665.5" fill="url(#kf)" stroke="#111" stroke-width="1" stroke-linejoin="round" />
<polygon points="652.5,695.5 681.9,676.7 670.3,660.6 651.6,672.4" fill="url(#kr0)" stroke="#111" stroke-width="1" stroke-linejoin="round" />
<polygon points="634.2,665.5 651.6,672.4 670.3,660.6 652.9,653.8" fill="#7a766e" stroke="#111" stroke-width="1" stroke-linejoin="round" />
<polygon points="654.7,696.4 683.2,708.0 682.3,684.7 664.6,677.6" fill="url(#kf)" stroke="#111" stroke-width="1" stroke-linejoin="round" />
<polygon points="683.2,708.0 712.6,688.8 701.0,672.7 682.3,684.7" fill="url(#kr0)" stroke="#111" stroke-width="1" stroke-linejoin="round" />
<polygon points="664.6,677.6 682.3,684.7 701.0,672.7 683.2,665.7" fill="#7a766e" stroke="#111" stroke-width="1" stroke-linejoin="round" />
<polygon points="685.5,708.9 714.6,720.7 713.6,697.1 695.5,689.9" fill="url(#kf)" stroke="#111" stroke-width="1" stroke-linejoin="round" />
<polygon points="714.6,720.7 743.9,701.2 732.2,684.9 713.6,697.1" fill="url(#kr0)" stroke="#111" stroke-width="1" stroke-linejoin="round" />
<polygon points="695.5,689.9 713.6,697.1 732.2,684.9 714.2,677.8" fill="#7a766e" stroke="#111" stroke-width="1" stroke-linejoin="round" />
<polygon points="716.9,721.6 746.5,733.7 745.6,709.9 727.1,702.5" fill="url(#kf)" stroke="#111" stroke-width="1" stroke-linejoin="round" />
<polygon points="746.5,733.7 775.8,713.9 764.2,697.5 745.6,709.9" fill="url(#kr1)" stroke="#111" stroke-width="1" stroke-linejoin="round" />
<polygon points="727.1,702.5 745.6,709.9 764.2,697.5 745.7,690.2" fill="#7a766e" stroke="#111" stroke-width="1" stroke-linejoin="round" />
<polygon points="748.9,734.6 779.1,746.9 778.1,722.9 759.3,715.4" fill="url(#kf)" stroke="#111" stroke-width="1" stroke-linejoin="round" />
<polygon points="779.1,746.9 808.4,726.8 796.7,710.2 778.1,722.9" fill="url(#kr1)" stroke="#111" stroke-width="1" stroke-linejoin="round" />
<polygon points="759.3,715.4 778.1,722.9 796.7,710.2 777.9,702.8" fill="#7a766e" stroke="#111" stroke-width="1" stroke-linejoin="round" />
<polygon points="781.5,747.9 812.4,760.4 811.4,736.1 792.2,728.5" fill="url(#kf)" stroke="#111" stroke-width="1" stroke-linejoin="round" />
<polygon points="812.4,760.4 841.6,739.9 829.9,723.3 811.4,736.1" fill="url(#kr2)" stroke="#111" stroke-width="1" stroke-linejoin="round" />
<polygon points="792.2,728.5 811.4,736.1 829.9,723.3 810.7,715.7" fill="#7a766e" stroke="#111" stroke-width="1" stroke-linejoin="round" />
<polygon points="814.9,761.4 846.4,774.2 845.3,749.6 825.7,741.8" fill="url(#kf)" stroke="#111" stroke-width="1" stroke-linejoin="round" />
<polygon points="846.4,774.2 875.4,753.3 863.8,736.6 845.3,749.6" fill="url(#kr2)" stroke="#111" stroke-width="1" stroke-linejoin="round" />
<polygon points="825.7,741.8 845.3,749.6 863.8,736.6 844.2,728.9" fill="#7a766e" stroke="#111" stroke-width="1" stroke-linejoin="round" />
<polygon points="848.9,775.2 881.0,788.3 880.0,763.5 860.0,755.5" fill="url(#kf)" stroke="#111" stroke-width="1" stroke-linejoin="round" />
<polygon points="881.0,788.3 910.0,767.0 898.4,750.1 880.0,763.5" fill="url(#kr3)" stroke="#111" stroke-width="1" stroke-linejoin="round" />
<polygon points="860.0,755.5 880.0,763.5 898.4,750.1 878.4,742.3" fill="#7a766e" stroke="#111" stroke-width="1" stroke-linejoin="round" />
<polygon points="883.6,789.3 916.4,802.6 915.3,777.6 894.9,769.4" fill="url(#kf)" stroke="#111" stroke-width="1" stroke-linejoin="round" />
<polygon points="916.4,802.6 945.3,781.0 933.7,764.0 915.3,777.6" fill="url(#kr4)" stroke="#111" stroke-width="1" stroke-linejoin="round" />
<polygon points="894.9,769.4 915.3,777.6 933.7,764.0 913.3,756.0" fill="#7a766e" stroke="#111" stroke-width="1" stroke-linejoin="round" />
<polygon points="987.7,831.6 1023.8,846.2 1022.6,820.3 999.7,811.2" fill="url(#kf)" stroke="#111" stroke-width="1" stroke-linejoin="round" />
<polygon points="1023.8,846.2 1052.3,823.4 1040.8,806.0 1022.6,820.3" fill="url(#kr5)" stroke="#111" stroke-width="1" stroke-linejoin="round" />
<polygon points="999.7,811.2 1022.6,820.3 1040.8,806.0 1017.9,797.0" fill="#7a766e" stroke="#111" stroke-width="1" stroke-linejoin="round" />
<polygon points="1026.8,847.4 1063.7,862.4 1062.5,836.2 1039.1,826.9" fill="url(#kf)" stroke="#111" stroke-width="1" stroke-linejoin="round" />
<polygon points="1063.7,862.4 1092.1,839.2 1080.6,821.6 1062.5,836.2" fill="url(#kr6)" stroke="#111" stroke-width="1" stroke-linejoin="round" />
<polygon points="1039.1,826.9 1062.5,836.2 1080.6,821.6 1057.2,812.5" fill="#7a766e" stroke="#111" stroke-width="1" stroke-linejoin="round" />
<polygon points="1066.8,863.7 1104.6,879.0 1103.4,852.5 1079.4,842.9" fill="url(#kf)" stroke="#111" stroke-width="1" stroke-linejoin="round" />
<polygon points="1104.6,879.0 1132.8,855.3 1121.3,837.6 1103.4,852.5" fill="url(#kr6)" stroke="#111" stroke-width="1" stroke-linejoin="round" />
<polygon points="1079.4,842.9 1103.4,852.5 1121.3,837.6 1097.4,828.2" fill="#7a766e" stroke="#111" stroke-width="1" stroke-linejoin="round" />
<polygon points="1107.7,880.3 1146.4,896.0 1145.1,869.1 1120.6,859.4" fill="url(#kf)" stroke="#111" stroke-width="1" stroke-linejoin="round" />
<polygon points="1146.4,896.0 1174.4,871.8 1162.9,854.0 1145.1,869.1" fill="url(#kr7)" stroke="#111" stroke-width="1" stroke-linejoin="round" />
<polygon points="1120.6,859.4 1145.1,869.1 1162.9,854.0 1138.5,844.4" fill="#7a766e" stroke="#111" stroke-width="1" stroke-linejoin="round" />
<polygon points="450.3,644.0 491.4,661.1 490.6,638.8 459.1,625.9" fill="url(#kf)" stroke="#111" stroke-width="1" stroke-linejoin="round" />
<polygon points="491.4,661.1 521.6,643.2 509.7,627.6 490.6,638.8" fill="url(#kr0)" stroke="#111" stroke-width="1" stroke-linejoin="round" />
<polygon points="459.1,625.9 490.6,638.8 509.7,627.6 478.2,614.9" fill="#7a766e" stroke="#111" stroke-width="1" stroke-linejoin="round" />
<polygon points="493.4,662.0 519.6,672.9 518.7,650.3 502.5,643.6" fill="url(#kf)" stroke="#111" stroke-width="1" stroke-linejoin="round" />
<polygon points="519.6,672.9 549.7,654.7 537.9,638.9 518.7,650.3" fill="url(#kr0)" stroke="#111" stroke-width="1" stroke-linejoin="round" />
<polygon points="502.5,643.6 518.7,650.3 537.9,638.9 521.6,632.3" fill="#7a766e" stroke="#111" stroke-width="1" stroke-linejoin="round" />
<polygon points="521.7,673.7 548.4,684.8 547.5,662.0 530.9,655.3" fill="url(#kf)" stroke="#111" stroke-width="1" stroke-linejoin="round" />
<polygon points="548.4,684.8 578.5,666.4 566.6,650.5 547.5,662.0" fill="url(#kr0)" stroke="#111" stroke-width="1" stroke-linejoin="round" />
<polygon points="530.9,655.3 547.5,662.0 566.6,650.5 550.0,643.8" fill="#7a766e" stroke="#111" stroke-width="1" stroke-linejoin="round" />
<polygon points="550.5,685.7 577.7,697.1 576.8,674.0 559.9,667.1" fill="url(#kf)" stroke="#111" stroke-width="1" stroke-linejoin="round" />
<polygon points="577.7,697.1 607.8,678.3 595.9,662.2 576.8,674.0" fill="url(#kr0)" stroke="#111" stroke-width="1" stroke-linejoin="round" />
<polygon points="559.9,667.1 576.8,674.0 595.9,662.2 579.0,655.4" fill="#7a766e" stroke="#111" stroke-width="1" stroke-linejoin="round" />
<polygon points="579.8,697.9 607.6,709.5 606.7,686.2 589.4,679.2" fill="url(#kf)" stroke="#111" stroke-width="1" stroke-linejoin="round" />
<polygon points="607.6,709.5 637.7,690.4 625.8,674.3 606.7,686.2" fill="url(#kr0)" stroke="#111" stroke-width="1" stroke-linejoin="round" />
<polygon points="589.4,679.2 606.7,686.2 625.8,674.3 608.5,667.3" fill="#7a766e" stroke="#111" stroke-width="1" stroke-linejoin="round" />
<polygon points="609.8,710.4 638.1,722.2 637.1,698.7 619.5,691.5" fill="url(#kf)" stroke="#111" stroke-width="1" stroke-linejoin="round" />
<polygon points="638.1,722.2 668.1,702.8 656.2,686.5 637.1,698.7" fill="url(#kr0)" stroke="#111" stroke-width="1" stroke-linejoin="round" />
<polygon points="619.5,691.5 637.1,698.7 656.2,686.5 638.6,679.4" fill="#7a766e" stroke="#111" stroke-width="1" stroke-linejoin="round" />
<polygon points="640.3,723.1 669.2,735.1 668.2,711.4 650.3,704.1" fill="url(#kf)" stroke="#111" stroke-width="1" stroke-linejoin="round" />
<polygon points="669.2,735.1 699.2,715.4 687.3,699.0 668.2,711.4" fill="url(#kr0)" stroke="#111" stroke-width="1" stroke-linejoin="round" />
<polygon points="650.3,704.1 668.2,711.4 687.3,699.0 669.3,691.8" fill="#7a766e" stroke="#111" stroke-width="1" stroke-linejoin="round" />
<polygon points="671.4,736.1 700.9,748.3 699.9,724.4 681.6,716.9" fill="url(#kf)" stroke="#111" stroke-width="1" stroke-linejoin="round" />
<polygon points="700.9,748.3 730.8,728.2 718.9,711.8 699.9,724.4" fill="url(#kr0)" stroke="#111" stroke-width="1" stroke-linejoin="round" />
<polygon points="681.6,716.9 699.9,724.4 718.9,711.8 700.6,704.4" fill="#7a766e" stroke="#111" stroke-width="1" stroke-linejoin="round" />
<polygon points="703.2,749.3 733.2,761.8 732.3,737.6 713.6,729.9" fill="url(#kf)" stroke="#111" stroke-width="1" stroke-linejoin="round" />
<polygon points="733.2,761.8 763.2,741.4 751.3,724.8 732.3,737.6" fill="url(#kr1)" stroke="#111" stroke-width="1" stroke-linejoin="round" />
<polygon points="713.6,729.9 732.3,737.6 751.3,724.8 732.6,717.3" fill="#7a766e" stroke="#111" stroke-width="1" stroke-linejoin="round" />
<polygon points="735.6,762.8 766.3,775.6 765.3,751.1 746.2,743.3" fill="url(#kf)" stroke="#111" stroke-width="1" stroke-linejoin="round" />
<polygon points="766.3,775.6 796.1,754.7 784.2,738.0 765.3,751.1" fill="url(#kr2)" stroke="#111" stroke-width="1" stroke-linejoin="round" />
<polygon points="746.2,743.3 765.3,751.1 784.2,738.0 765.2,730.4" fill="#7a766e" stroke="#111" stroke-width="1" stroke-linejoin="round" />
<polygon points="768.7,776.6 800.0,789.6 798.9,764.9 779.5,756.9" fill="url(#kf)" stroke="#111" stroke-width="1" stroke-linejoin="round" />
<polygon points="800.0,789.6 829.8,768.4 817.9,751.6 798.9,764.9" fill="url(#kr2)" stroke="#111" stroke-width="1" stroke-linejoin="round" />
<polygon points="779.5,756.9 798.9,764.9 817.9,751.6 798.4,743.8" fill="#7a766e" stroke="#111" stroke-width="1" stroke-linejoin="round" />
<polygon points="802.5,790.6 834.4,803.9 833.3,778.9 813.5,770.8" fill="url(#kf)" stroke="#111" stroke-width="1" stroke-linejoin="round" />
<polygon points="834.4,803.9 864.1,782.3 852.2,765.4 833.3,778.9" fill="url(#kr3)" stroke="#111" stroke-width="1" stroke-linejoin="round" />
<polygon points="813.5,770.8 833.3,778.9 852.2,765.4 832.4,757.4" fill="#7a766e" stroke="#111" stroke-width="1" stroke-linejoin="round" />
<polygon points="836.9,805.0 869.6,818.5 868.5,793.3 848.2,785.0" fill="url(#kf)" stroke="#111" stroke-width="1" stroke-linejoin="round" />
<polygon points="869.6,818.5 899.2,796.6 887.3,779.5 868.5,793.3" fill="url(#kr3)" stroke="#111" stroke-width="1" stroke-linejoin="round" />
<polygon points="848.2,785.0 868.5,793.3 887.3,779.5 867.0,771.4" fill="#7a766e" stroke="#111" stroke-width="1" stroke-linejoin="round" />
<polygon points="957.5,855.2 993.8,870.3 992.6,844.0 969.6,834.6" fill="url(#kf)" stroke="#111" stroke-width="1" stroke-linejoin="round" />
<polygon points="993.8,870.3 1023.0,846.9 1011.2,829.4 992.6,844.0" fill="url(#kr5)" stroke="#111" stroke-width="1" stroke-linejoin="round" />
<polygon points="969.6,834.6 992.6,844.0 1011.2,829.4 988.2,820.1" fill="#7a766e" stroke="#111" stroke-width="1" stroke-linejoin="round" />
<polygon points="996.8,871.5 1033.8,886.9 1032.6,860.4 1009.1,850.8" fill="url(#kf)" stroke="#111" stroke-width="1" stroke-linejoin="round" />
<polygon points="1033.8,886.9 1062.9,863.1 1051.1,845.5 1032.6,860.4" fill="url(#kr6)" stroke="#111" stroke-width="1" stroke-linejoin="round" />
<polygon points="1009.1,850.8 1032.6,860.4 1051.1,845.5 1027.6,836.0" fill="#7a766e" stroke="#111" stroke-width="1" stroke-linejoin="round" />
<polygon points="1036.9,888.2 1074.9,904.0 1073.6,877.2 1049.5,867.3" fill="url(#kf)" stroke="#111" stroke-width="1" stroke-linejoin="round" />
<polygon points="1074.9,904.0 1103.8,879.7 1092.0,861.9 1073.6,877.2" fill="url(#kr6)" stroke="#111" stroke-width="1" stroke-linejoin="round" />
<polygon points="1049.5,867.3 1073.6,877.2 1092.0,861.9 1068.0,852.2" fill="#7a766e" stroke="#111" stroke-width="1" stroke-linejoin="round" />
<polygon points="1078.0,905.3 1116.8,921.5 1115.6,894.3 1090.9,884.2" fill="url(#kf)" stroke="#111" stroke-width="1" stroke-linejoin="round" />
<polygon points="1116.8,921.5 1145.6,896.7 1133.8,878.8 1115.6,894.3" fill="url(#kr7)" stroke="#111" stroke-width="1" stroke-linejoin="round" />
<polygon points="1090.9,884.2 1115.6,894.3 1133.8,878.8 1109.3,868.9" fill="#7a766e" stroke="#111" stroke-width="1" stroke-linejoin="round" />
<polygon points="836.1,848.8 901.2,876.7 901.1,873.8 836.1,845.9" fill="#7d7d78" stroke="#111" stroke-width="0.9" stroke-linejoin="round" />
<polygon points="901.2,876.7 971.1,822.6 971.2,819.7 901.1,873.8" fill="#6a6a66" stroke="#111" stroke-width="0.9" stroke-linejoin="round" />
<polygon points="836.1,845.9 901.1,873.8 971.2,819.7 906.5,793.5" fill="#76726b" stroke="#111" stroke-width="0.9" stroke-linejoin="round" />
<polygon points="844.0,844.9 900.5,869.0 899.4,845.8 855.7,827.4" fill="url(#kf)" stroke="#111" stroke-width="1" stroke-linejoin="round" />
<polygon points="900.5,869.0 963.3,820.7 951.4,806.3 899.4,845.8" fill="url(#kr4)" stroke="#111" stroke-width="1" stroke-linejoin="round" />
<polygon points="855.7,827.4 899.4,845.8 951.4,806.3 907.9,788.8" fill="#7a766e" stroke="#111" stroke-width="1" stroke-linejoin="round" />
<polygon points="423.6,664.5 462.2,681.0 461.4,658.4 432.4,646.2" fill="url(#kf)" stroke="#111" stroke-width="1" stroke-linejoin="round" />
<polygon points="462.2,681.0 493.0,662.7 480.9,646.9 461.4,658.4" fill="url(#kr0)" stroke="#111" stroke-width="1" stroke-linejoin="round" />
<polygon points="432.4,646.2 461.4,658.4 480.9,646.9 451.9,634.9" fill="#7a766e" stroke="#111" stroke-width="1" stroke-linejoin="round" />
<polygon points="464.8,682.1 491.1,693.3 490.2,670.5 473.9,663.6" fill="url(#kf)" stroke="#111" stroke-width="1" stroke-linejoin="round" />
<polygon points="491.1,693.3 521.9,674.7 509.8,658.8 490.2,670.5" fill="url(#kr0)" stroke="#111" stroke-width="1" stroke-linejoin="round" />
<polygon points="473.9,663.6 490.2,670.5 509.8,658.8 493.4,652.1" fill="#7a766e" stroke="#111" stroke-width="1" stroke-linejoin="round" />
<polygon points="493.1,694.2 519.9,705.6 519.0,682.6 502.4,675.6" fill="url(#kf)" stroke="#111" stroke-width="1" stroke-linejoin="round" />
<polygon points="519.9,705.6 550.7,686.7 538.6,670.7 519.0,682.6" fill="url(#kr0)" stroke="#111" stroke-width="1" stroke-linejoin="round" />
<polygon points="502.4,675.6 519.0,682.6 538.6,670.7 521.9,663.8" fill="#7a766e" stroke="#111" stroke-width="1" stroke-linejoin="round" />
<polygon points="522.0,706.5 549.3,718.2 548.4,694.9 531.4,687.8" fill="url(#kf)" stroke="#111" stroke-width="1" stroke-linejoin="round" />
<polygon points="549.3,718.2 580.1,699.0 567.9,682.8 548.4,694.9" fill="url(#kr0)" stroke="#111" stroke-width="1" stroke-linejoin="round" />
<polygon points="531.4,687.8 548.4,694.9 567.9,682.8 551.0,675.8" fill="#7a766e" stroke="#111" stroke-width="1" stroke-linejoin="round" />
<polygon points="551.5,719.1 579.3,731.0 578.4,707.5 561.1,700.2" fill="url(#kf)" stroke="#111" stroke-width="1" stroke-linejoin="round" />
<polygon points="579.3,731.0 610.0,711.4 597.9,695.2 578.4,707.5" fill="url(#kr0)" stroke="#111" stroke-width="1" stroke-linejoin="round" />
<polygon points="561.1,700.2 578.4,707.5 597.9,695.2 580.6,688.0" fill="#7a766e" stroke="#111" stroke-width="1" stroke-linejoin="round" />
<polygon points="581.5,731.9 609.9,744.1 608.9,720.3 591.3,712.9" fill="url(#kf)" stroke="#111" stroke-width="1" stroke-linejoin="round" />
<polygon points="609.9,744.1 640.6,724.2 628.4,707.8 608.9,720.3" fill="url(#kr0)" stroke="#111" stroke-width="1" stroke-linejoin="round" />
<polygon points="591.3,712.9 608.9,720.3 628.4,707.8 610.8,700.5" fill="#7a766e" stroke="#111" stroke-width="1" stroke-linejoin="round" />
<polygon points="612.1,745.0 641.1,757.4 640.1,733.4 622.1,725.8" fill="url(#kf)" stroke="#111" stroke-width="1" stroke-linejoin="round" />
<polygon points="641.1,757.4 671.7,737.1 659.6,720.7 640.1,733.4" fill="url(#kr0)" stroke="#111" stroke-width="1" stroke-linejoin="round" />
<polygon points="622.1,725.8 640.1,733.4 659.6,720.7 641.6,713.2" fill="#7a766e" stroke="#111" stroke-width="1" stroke-linejoin="round" />
<polygon points="643.3,758.4 672.9,771.0 671.9,746.7 653.5,739.0" fill="url(#kf)" stroke="#111" stroke-width="1" stroke-linejoin="round" />
<polygon points="672.9,771.0 703.5,750.4 691.4,733.8 671.9,746.7" fill="url(#kr0)" stroke="#111" stroke-width="1" stroke-linejoin="round" />
<polygon points="653.5,739.0 671.9,746.7 691.4,733.8 673.0,726.2" fill="#7a766e" stroke="#111" stroke-width="1" stroke-linejoin="round" />
<polygon points="675.2,772.0 705.4,784.9 704.4,760.3 685.6,752.5" fill="url(#kf)" stroke="#111" stroke-width="1" stroke-linejoin="round" />
<polygon points="705.4,784.9 736.0,763.9 723.8,747.2 704.4,760.3" fill="url(#kr1)" stroke="#111" stroke-width="1" stroke-linejoin="round" />
<polygon points="685.6,752.5 704.4,760.3 723.8,747.2 705.1,739.4" fill="#7a766e" stroke="#111" stroke-width="1" stroke-linejoin="round" />
<polygon points="707.7,785.9 738.5,799.0 737.5,774.2 718.4,766.2" fill="url(#kf)" stroke="#111" stroke-width="1" stroke-linejoin="round" />
<polygon points="738.5,799.0 769.1,777.7 756.9,760.8 737.5,774.2" fill="url(#kr2)" stroke="#111" stroke-width="1" stroke-linejoin="round" />
<polygon points="718.4,766.2 737.5,774.2 756.9,760.8 737.8,753.0" fill="#7a766e" stroke="#111" stroke-width="1" stroke-linejoin="round" />
<polygon points="741.0,800.1 772.4,813.5 771.3,788.4 751.8,780.2" fill="url(#kf)" stroke="#111" stroke-width="1" stroke-linejoin="round" />
<polygon points="772.4,813.5 802.9,791.8 790.7,774.8 771.3,788.4" fill="url(#kr2)" stroke="#111" stroke-width="1" stroke-linejoin="round" />
<polygon points="751.8,780.2 771.3,788.4 790.7,774.8 771.2,766.7" fill="#7a766e" stroke="#111" stroke-width="1" stroke-linejoin="round" />
<polygon points="774.9,814.5 807.0,828.3 805.9,802.9 785.9,794.5" fill="url(#kf)" stroke="#111" stroke-width="1" stroke-linejoin="round" />
<polygon points="807.0,828.3 837.4,806.1 825.2,789.1 805.9,802.9" fill="url(#kr3)" stroke="#111" stroke-width="1" stroke-linejoin="round" />
<polygon points="785.9,794.5 805.9,802.9 825.2,789.1 805.3,780.8" fill="#7a766e" stroke="#111" stroke-width="1" stroke-linejoin="round" />
<polygon points="809.5,829.3 842.3,843.3 841.2,817.7 820.8,809.2" fill="url(#kf)" stroke="#111" stroke-width="1" stroke-linejoin="round" />
<polygon points="842.3,843.3 872.6,820.8 860.5,803.6 841.2,817.7" fill="url(#kr3)" stroke="#111" stroke-width="1" stroke-linejoin="round" />
<polygon points="820.8,809.2 841.2,817.7 860.5,803.6 840.1,795.2" fill="#7a766e" stroke="#111" stroke-width="1" stroke-linejoin="round" />
<polygon points="926.6,879.3 963.0,894.9 961.8,868.3 938.7,858.6" fill="url(#kf)" stroke="#111" stroke-width="1" stroke-linejoin="round" />
<polygon points="963.0,894.9 992.9,870.9 980.8,853.3 961.8,868.3" fill="url(#kr5)" stroke="#111" stroke-width="1" stroke-linejoin="round" />
<polygon points="938.7,858.6 961.8,868.3 980.8,853.3 957.8,843.8" fill="#7a766e" stroke="#111" stroke-width="1" stroke-linejoin="round" />
<polygon points="966.0,896.2 1003.2,912.1 1002.0,885.2 978.4,875.3" fill="url(#kf)" stroke="#111" stroke-width="1" stroke-linejoin="round" />
<polygon points="1003.2,912.1 1033.0,887.6 1020.9,869.9 1002.0,885.2" fill="url(#kr6)" stroke="#111" stroke-width="1" stroke-linejoin="round" />
<polygon points="978.4,875.3 1002.0,885.2 1020.9,869.9 997.4,860.1" fill="#7a766e" stroke="#111" stroke-width="1" stroke-linejoin="round" />
<polygon points="1006.3,913.4 1044.4,929.7 1043.1,902.5 1018.9,892.3" fill="url(#kf)" stroke="#111" stroke-width="1" stroke-linejoin="round" />
<polygon points="1044.4,929.7 1074.0,904.7 1062.0,886.8 1043.1,902.5" fill="url(#kr6)" stroke="#111" stroke-width="1" stroke-linejoin="round" />
<polygon points="1018.9,892.3 1043.1,902.5 1062.0,886.8 1037.9,876.9" fill="#7a766e" stroke="#111" stroke-width="1" stroke-linejoin="round" />
<polygon points="1047.5,931.0 1086.5,947.7 1085.3,920.1 1060.5,909.7" fill="url(#kf)" stroke="#111" stroke-width="1" stroke-linejoin="round" />
<polygon points="1086.5,947.7 1116.0,922.2 1104.0,904.2 1085.3,920.1" fill="url(#kr7)" stroke="#111" stroke-width="1" stroke-linejoin="round" />
<polygon points="1060.5,909.7 1085.3,920.1 1104.0,904.2 1079.3,894.0" fill="#7a766e" stroke="#111" stroke-width="1" stroke-linejoin="round" />
<polygon points="398.5,686.5 438.8,704.1 437.9,681.2 407.4,668.0" fill="url(#kf)" stroke="#111" stroke-width="1" stroke-linejoin="round" />
<polygon points="438.8,704.1 470.2,685.3 457.9,669.4 437.9,681.2" fill="url(#kr0)" stroke="#111" stroke-width="1" stroke-linejoin="round" />
<polygon points="407.4,668.0 437.9,681.2 457.9,669.4 427.4,656.4" fill="#7a766e" stroke="#111" stroke-width="1" stroke-linejoin="round" />
<polygon points="445.6,707.1 472.1,718.8 471.2,695.5 454.8,688.4" fill="url(#kf)" stroke="#111" stroke-width="1" stroke-linejoin="round" />
<polygon points="472.1,718.8 503.5,699.6 491.2,683.5 471.2,695.5" fill="url(#kr0)" stroke="#111" stroke-width="1" stroke-linejoin="round" />
<polygon points="454.8,688.4 471.2,695.5 491.2,683.5 474.7,676.5" fill="#7a766e" stroke="#111" stroke-width="1" stroke-linejoin="round" />
<polygon points="474.2,719.7 501.2,731.5 500.3,708.1 483.5,700.8" fill="url(#kf)" stroke="#111" stroke-width="1" stroke-linejoin="round" />
<polygon points="501.2,731.5 532.6,712.0 520.3,695.8 500.3,708.1" fill="url(#kr0)" stroke="#111" stroke-width="1" stroke-linejoin="round" />
<polygon points="483.5,700.8 500.3,708.1 520.3,695.8 503.5,688.7" fill="#7a766e" stroke="#111" stroke-width="1" stroke-linejoin="round" />
<polygon points="503.3,732.4 530.9,744.5 530.0,720.8 512.8,713.4" fill="url(#kf)" stroke="#111" stroke-width="1" stroke-linejoin="round" />
<polygon points="530.9,744.5 562.3,724.7 549.9,708.4 530.0,720.8" fill="url(#kr0)" stroke="#111" stroke-width="1" stroke-linejoin="round" />
<polygon points="512.8,713.4 530.0,720.8 549.9,708.4 532.8,701.1" fill="#7a766e" stroke="#111" stroke-width="1" stroke-linejoin="round" />
<polygon points="533.0,745.5 561.1,757.8 560.2,733.9 542.7,726.3" fill="url(#kf)" stroke="#111" stroke-width="1" stroke-linejoin="round" />
<polygon points="561.1,757.8 592.6,737.6 580.2,721.2 560.2,733.9" fill="url(#kr0)" stroke="#111" stroke-width="1" stroke-linejoin="round" />
<polygon points="542.7,726.3 560.2,733.9 580.2,721.2 562.7,713.8" fill="#7a766e" stroke="#111" stroke-width="1" stroke-linejoin="round" />
<polygon points="563.4,758.8 592.0,771.3 591.1,747.2 573.2,739.5" fill="url(#kf)" stroke="#111" stroke-width="1" stroke-linejoin="round" />
<polygon points="592.0,771.3 623.4,750.8 611.0,734.3 591.1,747.2" fill="url(#kr0)" stroke="#111" stroke-width="1" stroke-linejoin="round" />
<polygon points="573.2,739.5 591.1,747.2 611.0,734.3 593.2,726.7" fill="#7a766e" stroke="#111" stroke-width="1" stroke-linejoin="round" />
<polygon points="594.3,772.3 623.5,785.2 622.6,760.7 604.4,752.9" fill="url(#kf)" stroke="#111" stroke-width="1" stroke-linejoin="round" />
<polygon points="623.5,785.2 654.9,764.3 642.5,747.6 622.6,760.7" fill="url(#kr0)" stroke="#111" stroke-width="1" stroke-linejoin="round" />
<polygon points="604.4,752.9 622.6,760.7 642.5,747.6 624.3,739.9" fill="#7a766e" stroke="#111" stroke-width="1" stroke-linejoin="round" />
<polygon points="625.8,786.2 655.7,799.3 654.7,774.6 636.1,766.6" fill="url(#kf)" stroke="#111" stroke-width="1" stroke-linejoin="round" />
<polygon points="655.7,799.3 687.0,778.0 674.6,761.3 654.7,774.6" fill="url(#kr1)" stroke="#111" stroke-width="1" stroke-linejoin="round" />
<polygon points="636.1,766.6 654.7,774.6 674.6,761.3 656.1,753.4" fill="#7a766e" stroke="#111" stroke-width="1" stroke-linejoin="round" />
<polygon points="658.1,800.3 688.6,813.7 687.5,788.7 668.6,780.5" fill="url(#kf)" stroke="#111" stroke-width="1" stroke-linejoin="round" />
<polygon points="688.6,813.7 719.8,792.0 707.4,775.1 687.5,788.7" fill="url(#kr1)" stroke="#111" stroke-width="1" stroke-linejoin="round" />
<polygon points="668.6,780.5 687.5,788.7 707.4,775.1 688.5,767.1" fill="#7a766e" stroke="#111" stroke-width="1" stroke-linejoin="round" />
<polygon points="691.0,814.7 722.1,828.4 721.1,803.1 701.7,794.8" fill="url(#kf)" stroke="#111" stroke-width="1" stroke-linejoin="round" />
<polygon points="722.1,828.4 753.3,806.3 740.9,789.3 721.1,803.1" fill="url(#kr2)" stroke="#111" stroke-width="1" stroke-linejoin="round" />
<polygon points="701.7,794.8 721.1,803.1 740.9,789.3 721.6,781.1" fill="#7a766e" stroke="#111" stroke-width="1" stroke-linejoin="round" />
<polygon points="724.5,829.4 756.3,843.4 755.3,817.9 735.5,809.4" fill="url(#kf)" stroke="#111" stroke-width="1" stroke-linejoin="round" />
<polygon points="756.3,843.4 787.5,821.0 775.1,803.8 755.3,817.9" fill="url(#kr2)" stroke="#111" stroke-width="1" stroke-linejoin="round" />
<polygon points="735.5,809.4 755.3,817.9 775.1,803.8 755.3,795.5" fill="#7a766e" stroke="#111" stroke-width="1" stroke-linejoin="round" />
<polygon points="758.9,844.5 791.3,858.7 790.3,833.0 770.1,824.3" fill="url(#kf)" stroke="#111" stroke-width="1" stroke-linejoin="round" />
<polygon points="791.3,858.7 822.4,835.9 810.0,818.6 790.3,833.0" fill="url(#kr3)" stroke="#111" stroke-width="1" stroke-linejoin="round" />
<polygon points="770.1,824.3 790.3,833.0 810.0,818.6 789.8,810.1" fill="#7a766e" stroke="#111" stroke-width="1" stroke-linejoin="round" />
<polygon points="800.0,867.5 862.5,895.0 862.4,892.0 799.9,864.6" fill="#7d7d78" stroke="#111" stroke-width="0.9" stroke-linejoin="round" />
<polygon points="862.5,895.0 901.3,865.1 901.3,862.2 862.4,892.0" fill="#6a6a66" stroke="#111" stroke-width="0.9" stroke-linejoin="round" />
<polygon points="799.9,864.6 862.4,892.0 901.3,862.2 839.0,835.7" fill="#76726b" stroke="#111" stroke-width="0.9" stroke-linejoin="round" />
<polygon points="808.0,863.6 861.9,887.2 860.8,863.8 819.6,846.1" fill="url(#kf)" stroke="#111" stroke-width="1" stroke-linejoin="round" />
<polygon points="861.9,887.2 893.2,863.2 880.9,848.7 860.8,863.8" fill="url(#kr4)" stroke="#111" stroke-width="1" stroke-linejoin="round" />
<polygon points="819.6,846.1 860.8,863.8 880.9,848.7 839.7,831.2" fill="#7a766e" stroke="#111" stroke-width="1" stroke-linejoin="round" />
<polygon points="894.9,904.1 931.4,920.1 930.2,893.2 907.0,883.3" fill="url(#kf)" stroke="#111" stroke-width="1" stroke-linejoin="round" />
<polygon points="931.4,920.1 962.1,895.6 949.7,877.8 930.2,893.2" fill="url(#kr5)" stroke="#111" stroke-width="1" stroke-linejoin="round" />
<polygon points="907.0,883.3 930.2,893.2 949.7,877.8 926.6,868.0" fill="#7a766e" stroke="#111" stroke-width="1" stroke-linejoin="round" />
<polygon points="934.4,921.5 971.7,937.8 970.5,910.6 946.8,900.4" fill="url(#kf)" stroke="#111" stroke-width="1" stroke-linejoin="round" />
<polygon points="971.7,937.8 1002.3,912.8 990.0,894.9 970.5,910.6" fill="url(#kr6)" stroke="#111" stroke-width="1" stroke-linejoin="round" />
<polygon points="946.8,900.4 970.5,910.6 990.0,894.9 966.3,884.9" fill="#7a766e" stroke="#111" stroke-width="1" stroke-linejoin="round" />
<polygon points="974.8,939.2 1013.1,956.0 1011.8,928.4 987.6,917.9" fill="url(#kf)" stroke="#111" stroke-width="1" stroke-linejoin="round" />
<polygon points="1013.1,956.0 1043.5,930.4 1031.2,912.4 1011.8,928.4" fill="url(#kr6)" stroke="#111" stroke-width="1" stroke-linejoin="round" />
<polygon points="987.6,917.9 1011.8,928.4 1031.2,912.4 1007.0,902.1" fill="#7a766e" stroke="#111" stroke-width="1" stroke-linejoin="round" />
<polygon points="1016.2,957.4 1055.4,974.5 1054.1,946.6 1029.3,935.9" fill="url(#kf)" stroke="#111" stroke-width="1" stroke-linejoin="round" />
<polygon points="1055.4,974.5 1085.7,948.4 1073.4,930.2 1054.1,946.6" fill="url(#kr7)" stroke="#111" stroke-width="1" stroke-linejoin="round" />
<polygon points="1029.3,935.9 1054.1,946.6 1073.4,930.2 1048.6,919.7" fill="#7a766e" stroke="#111" stroke-width="1" stroke-linejoin="round" />
<polygon points="865.4,928.7 907.3,947.5 907.3,944.1 865.3,925.3" fill="#7d7d78" stroke="#111" stroke-width="0.9" stroke-linejoin="round" />
<polygon points="865.3,925.3 907.3,944.1 936.8,920.4 895.0,902.1" fill="#77736c" stroke="#111" stroke-width="0.9" stroke-linejoin="round" />
<polygon points="403.0,722.7 429.3,734.5 428.4,711.1 412.0,703.9" fill="url(#kf)" stroke="#111" stroke-width="1" stroke-linejoin="round" />
<polygon points="429.3,734.5 461.4,715.0 448.8,698.9 428.4,711.1" fill="url(#kr0)" stroke="#111" stroke-width="1" stroke-linejoin="round" />
<polygon points="412.0,703.9 428.4,711.1 448.8,698.9 432.5,691.8" fill="#7a766e" stroke="#111" stroke-width="1" stroke-linejoin="round" />
<polygon points="434.6,736.9 468.9,752.3 468.0,728.6 443.9,718.0" fill="url(#kf)" stroke="#111" stroke-width="1" stroke-linejoin="round" />
<polygon points="468.9,752.3 501.0,732.4 488.4,716.1 468.0,728.6" fill="url(#kr0)" stroke="#111" stroke-width="1" stroke-linejoin="round" />
<polygon points="443.9,718.0 468.0,728.6 488.4,716.1 464.4,705.6" fill="#7a766e" stroke="#111" stroke-width="1" stroke-linejoin="round" />
<polygon points="472.4,754.0 728.1,869.1 727.0,843.2 482.0,734.8" fill="url(#kf)" stroke="#111" stroke-width="1" stroke-linejoin="round" />
<polygon points="728.1,869.1 760.0,846.0 747.3,828.8 727.0,843.2" fill="url(#kr3)" stroke="#111" stroke-width="1" stroke-linejoin="round" />
<polygon points="482.0,734.8 727.0,843.2 747.3,828.8 502.4,722.2" fill="#7a766e" stroke="#111" stroke-width="1" stroke-linejoin="round" />
<polygon points="725.5,874.3 775.3,896.8 775.1,893.8 725.4,871.3" fill="#7d7d78" stroke="#111" stroke-width="0.9" stroke-linejoin="round" />
<polygon points="775.3,896.8 816.3,866.2 816.2,863.2 775.1,893.8" fill="#6a6a66" stroke="#111" stroke-width="0.9" stroke-linejoin="round" />
<polygon points="725.4,871.3 775.1,893.8 816.2,863.2 766.6,841.6" fill="#76726b" stroke="#111" stroke-width="0.9" stroke-linejoin="round" />
<polygon points="733.5,870.3 774.9,888.9 773.9,865.7 744.9,852.8" fill="url(#kf)" stroke="#111" stroke-width="1" stroke-linejoin="round" />
<polygon points="774.9,888.9 808.2,864.3 795.6,849.8 773.9,865.7" fill="url(#kr3)" stroke="#111" stroke-width="1" stroke-linejoin="round" />
<polygon points="744.9,852.8 773.9,865.7 795.6,849.8 766.6,837.2" fill="#7a766e" stroke="#111" stroke-width="1" stroke-linejoin="round" />
<polygon points="911.0,960.5 964.1,984.5 962.8,956.6 923.6,939.1" fill="url(#kf)" stroke="#111" stroke-width="1" stroke-linejoin="round" />
<polygon points="964.1,984.5 993.3,960.0 980.6,941.9 962.8,956.6" fill="url(#kr6)" stroke="#111" stroke-width="1" stroke-linejoin="round" />
<polygon points="923.6,939.1 962.8,956.6 980.6,941.9 941.5,924.7" fill="#7a766e" stroke="#111" stroke-width="1" stroke-linejoin="round" />
<polygon points="833.8,959.5 885.5,983.4 884.3,955.6 846.1,938.2" fill="url(#kf)" stroke="#111" stroke-width="1" stroke-linejoin="round" />
<polygon points="885.5,983.4 915.5,959.1 902.6,941.0 884.3,955.6" fill="url(#kr6)" stroke="#111" stroke-width="1" stroke-linejoin="round" />
<polygon points="846.1,938.2 884.3,955.6 902.6,941.0 864.4,923.9" fill="#7a766e" stroke="#111" stroke-width="1" stroke-linejoin="round" />
<polygon points="883.9,982.7 936.6,1007.1 935.3,978.9 896.6,961.2" fill="url(#kf)" stroke="#111" stroke-width="1" stroke-linejoin="round" />
<polygon points="936.6,1007.1 966.5,982.1 953.5,963.9 935.3,978.9" fill="url(#kr6)" stroke="#111" stroke-width="1" stroke-linejoin="round" />
<polygon points="896.6,961.2 935.3,978.9 953.5,963.9 914.8,946.5" fill="#7a766e" stroke="#111" stroke-width="1" stroke-linejoin="round" />
<polygon points="935.3,1006.5 989.9,1031.8 988.6,1003.1 948.3,984.8" fill="url(#kf)" stroke="#111" stroke-width="1" stroke-linejoin="round" />
<polygon points="989.9,1031.8 1019.6,1006.1 1006.7,987.7 988.6,1003.1" fill="url(#kr7)" stroke="#111" stroke-width="1" stroke-linejoin="round" />
<polygon points="948.3,984.8 988.6,1003.1 1006.7,987.7 966.5,969.7" fill="#7a766e" stroke="#111" stroke-width="1" stroke-linejoin="round" /></svg>

<div style="position:absolute;left:0;top:0;width:1928px;height:23px;background:#fff"></div>
<div style="position:absolute;left:0;top:0;width:8px;height:34px;background:#e6e6ea"></div>
<div style="position:absolute;left:11px;top:3px;width:14px;height:17px;border-radius:2px;background:linear-gradient(#ff8a1c,#e35a00)"></div>
<div style="position:absolute;left:12px;top:15px;width:12px;height:4px;background:#a33c00"></div>
<div style="position:absolute;left:15px;top:3px;font:bold 10px 'Liberation Sans',sans-serif;color:#fff">F</div>
<div style="position:absolute;left:31px;top:3px;font:12.5px 'Liberation Sans',sans-serif;color:#111;white-space:nowrap">Autodesk Fusion 360 (個人用 - 商用利用不可)</div>
<svg style="position:absolute;left:1800px;top:0" width="128" height="23">
 <path d="M7 11.5h10" stroke="#111" stroke-width="1"/>
 <path d="M52.5 7.5h7v7h-7z M54.5 7.5v-2h7v7h-2" stroke="#111" fill="none" stroke-width="1"/>
 <path d="M98 6l10 10M108 6l-10 10" stroke="#111" stroke-width="1.1"/>
</svg>

<div style="position:absolute;left:8px;top:23px;width:1920px;height:32px;background:#c9c9c9"></div>
<svg style="position:absolute;left:8px;top:23px" width="200" height="32">
 <g fill="#555">
  <rect x="9" y="9" width="4" height="4"/><rect x="14" y="9" width="4" height="4"/><rect x="19" y="9" width="4" height="4"/>
  <rect x="9" y="14" width="4" height="4"/><rect x="14" y="14" width="4" height="4"/><rect x="19" y="14" width="4" height="4"/>
  <rect x="9" y="19" width="4" height="4"/><rect x="14" y="19" width="4" height="4"/><rect x="19" y="19" width="4" height="4"/>
  <path d="M42 8h9l4 4v12h-13z"/>
  <path d="M61 13h6l-3 4z"/>
 </g>
 <g fill="#8a8a8a">
  <path d="M87 9h12l2 2v12h-14z"/><rect x="90" y="10" width="7" height="4" fill="#c9c9c9"/><rect x="90" y="17" width="8" height="5" fill="#c9c9c9"/><rect x="92" y="18" width="2" height="4" fill="#8a8a8a"/>
  <path d="M122 15l5-5v3c6 0 9 3 9 9c-2-4-4-5-9-5v3z"/>
  <path d="M141 13h6l-3 4z"/>
  <path d="M174 15l-5-5v3c-6 0-9 3-9 9c2-4 4-5 9-5v3z"/>
  <path d="M181 13h6l-3 4z"/>
 </g>
</svg>
<div style="position:absolute;left:201px;top:27px;width:739px;height:28px;background:#bcbcbc;border-radius:5px 5px 0 0"></div>
<svg style="position:absolute;left:509px;top:32px" width="18" height="18"><path d="M2 4l7-3 7 3v9l-7 4-7-4z" fill="#7a7a7a"/><path d="M2 4l7 3 7-3M9 7v10" stroke="#bcbcbc" stroke-width="1" fill="none"/></svg>
<div style="position:absolute;left:529px;top:34px;font:13px 'Liberation Sans',sans-serif;color:#666;white-space:nowrap">HC-95_open v1</div>
<svg style="position:absolute;left:919px;top:35px" width="12" height="12"><path d="M1 1l10 10M11 1l-10 10" stroke="#666" stroke-width="1.5"/></svg>
<div style="position:absolute;left:942px;top:27px;width:735px;height:28px;background:#f0f0f0;border-radius:5px 5px 0 0"></div>
<svg style="position:absolute;left:1266px;top:32px" width="18" height="18"><path d="M2 4l7-3 7 3v9l-7 4-7-4z" fill="#6e6e6e"/><path d="M2 4l7 3 7-3M9 7v10" stroke="#f0f0f0" stroke-width="1" fill="none"/></svg>
<div style="position:absolute;left:1287px;top:34px;font:13px 'Liberation Sans',sans-serif;color:#222;white-space:nowrap">HC-95 v1</div>
<svg style="position:absolute;left:1659px;top:35px" width="12" height="12"><path d="M1 1l10 10M11 1l-10 10" stroke="#555" stroke-width="1.5"/></svg>
<div style="position:absolute;left:1681px;top:27px;width:32px;height:27px;background:#bdbdbd;border-radius:2px"></div>
<svg style="position:absolute;left:1681px;top:27px" width="247" height="28">
 <path d="M16 7v14M9 14h14" stroke="#6a6a6a" stroke-width="2"/>
 <path d="M42 6h9l3 3v4l-6 7h-6z" fill="#6a6a6a"/><path d="M47 20l8-9 2 2-8 9h-2z" fill="#6a6a6a"/>
 <text x="59" y="17" font-family="Liberation Sans" font-size="11" fill="#333">9/10</text>
 <circle cx="112" cy="13" r="8" fill="#666"/><circle cx="112" cy="13" r="6" fill="#f0f0f0" opacity="0"/><circle cx="112" cy="13" r="5.5" fill="none" stroke="#f0f0f0" stroke-width="1.2"/><path d="M112 9v4h3" stroke="#f0f0f0" stroke-width="1.3" fill="none"/>
 <path d="M139 19h12l-2-3v-4a4 4 0 0 0-8 0v4z" fill="#666"/><circle cx="145" cy="21" r="1.5" fill="#666"/><circle cx="149" cy="7" r="2.5" fill="#1e90ff"/>
 <circle cx="178" cy="13" r="8" fill="#666"/><text x="174" y="18" font-family="Liberation Sans" font-size="12" font-weight="bold" fill="#f0f0f0">?</text>
 <circle cx="220" cy="13" r="11" fill="#8495ad"/><circle cx="220" cy="10" r="5" fill="#2c3e55"/><path d="M210 22c2-6 18-6 20 0z" fill="#2c3e55"/>
</svg>
<div style="position:absolute;left:8px;top:55px;width:1920px;height:82px;background:#f0f0f0;border-bottom:1px solid #dadada"></div>
<div style="position:absolute;left:20px;top:66px;width:106px;height:58px;border:1px solid #d2d2d2;border-radius:4px;background:#f0f0f0"></div>
<div style="position:absolute;left:50px;top:87px;font:bold 11px 'Liberation Sans',sans-serif;color:#222;font-family:'Liberation Sans',sans-serif">デザイン <span style="font-size:8px">▼</span></div>
<div style="position:absolute;left:157px;top:60px;font:bold 10.5px 'Liberation Sans',sans-serif;color:#0a8fd8;white-space:nowrap">ソリッド</div>
<div style="position:absolute;left:235px;top:60px;font:10.5px 'Liberation Sans',sans-serif;color:#333;white-space:nowrap">サーフェス</div>
<div style="position:absolute;left:322px;top:60px;font:10.5px 'Liberation Sans',sans-serif;color:#333;white-space:nowrap">メッシュ</div>
<div style="position:absolute;left:396px;top:60px;font:10.5px 'Liberation Sans',sans-serif;color:#333;white-space:nowrap">フォーム</div>
<div style="position:absolute;left:474px;top:60px;font:10.5px 'Liberation Sans',sans-serif;color:#333;white-space:nowrap">シート メタル</div>
<div style="position:absolute;left:572px;top:60px;font:10.5px 'Liberation Sans',sans-serif;color:#333;white-space:nowrap">プラスチック</div>
<div style="position:absolute;left:666px;top:60px;font:10.5px 'Liberation Sans',sans-serif;color:#333;white-space:nowrap">ユーティリティ</div>
<div style="position:absolute;left:146px;top:76px;width:55px;height:3px;background:#0a8fd8"></div>
<div style="position:absolute;left:227px;top:118px;font:12px 'Liberation Sans',sans-serif;color:#333;white-space:nowrap">作成 <span style="font-size:7px;vertical-align:1px">▼</span></div>
<div style="position:absolute;left:475px;top:118px;font:12px 'Liberation Sans',sans-serif;color:#333;white-space:nowrap">修正 <span style="font-size:7px;vertical-align:1px">▼</span></div>
<div style="position:absolute;left:651px;top:118px;font:12px 'Liberation Sans',sans-serif;color:#333;white-space:nowrap">アセンブリ <span style="font-size:7px;vertical-align:1px">▼</span></div>
<div style="position:absolute;left:738px;top:118px;font:12px 'Liberation Sans',sans-serif;color:#333;white-space:nowrap">構築 <span style="font-size:7px;vertical-align:1px">▼</span></div>
<div style="position:absolute;left:797px;top:118px;font:12px 'Liberation Sans',sans-serif;color:#333;white-space:nowrap">検査 <span style="font-size:7px;vertical-align:1px">▼</span></div>
<div style="position:absolute;left:856px;top:118px;font:12px 'Liberation Sans',sans-serif;color:#333;white-space:nowrap">挿入 <span style="font-size:7px;vertical-align:1px">▼</span></div>
<div style="position:absolute;left:915px;top:118px;font:12px 'Liberation Sans',sans-serif;color:#333;white-space:nowrap">選択 <span style="font-size:7px;vertical-align:1px">▼</span></div>
<div style="position:absolute;left:358px;top:82px;width:2px;height:48px;background:#dcdcdc"></div>
<div style="position:absolute;left:627px;top:82px;width:2px;height:48px;background:#dcdcdc"></div>
<div style="position:absolute;left:725px;top:82px;width:2px;height:48px;background:#dcdcdc"></div>
<div style="position:absolute;left:785px;top:82px;width:2px;height:48px;background:#dcdcdc"></div>
<div style="position:absolute;left:843px;top:82px;width:2px;height:48px;background:#dcdcdc"></div>
<div style="position:absolute;left:902px;top:82px;width:2px;height:48px;background:#dcdcdc"></div>
<svg style="position:absolute;left:0;top:55px" width="960" height="82">
<defs>
 <linearGradient id="gb" x1="0" y1="0" x2="1" y2="1"><stop offset="0" stop-color="#8cc8f4"/><stop offset="1" stop-color="#3d8fd1"/></linearGradient>
</defs>
<!-- sketch -->
<g transform="translate(146,26)">
 <rect x="1" y="1" width="28" height="28" fill="none" stroke="#444" stroke-width="1.2" stroke-dasharray="3 2"/>
 <rect x="0" y="0" width="3" height="3" fill="#555"/><rect x="27" y="0" width="3" height="3" fill="#555"/><rect x="0" y="27" width="3" height="3" fill="#555"/>
 <path d="M8 8h12M8 8v12" stroke="#555" fill="none"/><path d="M8 20c4 0 12-4 12-12" stroke="#555" fill="none"/>
 <path d="M23 20h5v5h5v5h-5v5h-5v-5h-5v-5h5z" fill="#1aa23a" transform="translate(-1,-4) scale(0.95)"/>
</g>
<!-- extrude -->
<g transform="translate(188,26)">
 <path d="M1 6l5-5h19v25l-5 5h-19z" fill="#5aa7e6"/><path d="M1 6l5-5h19l-5 5z" fill="#9ad0f7"/><path d="M20 6l5-5v25l-5 5z" fill="#3b86c8"/>
 <path d="M1 31h19l5-5v3l-5 5h-19z" fill="#c8c8c8"/>
 <path d="M28 28v-26M25 6l3-5 3 5" stroke="#333" stroke-width="1.2" fill="none"/>
</g>
<!-- revolve -->
<g transform="translate(229,27)">
 <path d="M2 14c8-4 24-4 32 0v6c-8-4-24-4-32 0z" fill="#9ad0f7"/>
 <path d="M2 20c8-4 24-4 32 0l-3 10c-7-3-19-3-26 0z" fill="#4d9de0"/>
 <path d="M30 22l5-3v9l-4 3z" fill="#fff" stroke="#444" stroke-width="0.8"/>
 <path d="M4 8c8-6 22-6 28 0" stroke="#333" fill="none" stroke-width="1.2"/><path d="M4 8l4-1M4 8l1 3" stroke="#333"/>
</g>
<!-- hole -->
<g transform="translate(272,27)">
 <path d="M1 5l4-4h26v26l-4 4h-26z" fill="#d9d9d9" stroke="#777" stroke-width="1"/>
 <path d="M27 5v26M1 5h26l4-4" stroke="#777" fill="none"/>
 <circle cx="14" cy="18" r="9" fill="#eee" stroke="#555" stroke-width="1.2"/><path d="M8 18a6 6 0 0 0 12 0a6 6 0 0 1-6-6a6 6 0 0 0-6 6z" fill="#4d9de0"/>
</g>
<!-- pattern -->
<g transform="translate(317,30)">
 <rect x="0" y="0" width="7" height="7" fill="#fff" stroke="#555"/><rect x="21" y="0" width="7" height="7" fill="#4d9de0"/>
 <rect x="0" y="21" width="7" height="7" fill="#4d9de0"/><rect x="21" y="21" width="7" height="7" fill="#4d9de0"/>
 <path d="M7 3.5h14M3.5 7v14M7 24.5h14" stroke="#555"/>
</g>
<!-- press pull -->
<g transform="translate(372,27)">
 <path d="M2 5l4-4h6v30h-10z" fill="#ddd" stroke="#666"/><path d="M8 5l5-4h6v26l-5 4h-6z" fill="#5aa7e6"/><path d="M14 5l5-4v26l-5 4z" fill="#3b86c8"/>
 <path d="M16 16h12M25 13l3 3-3 3" stroke="#222" stroke-width="1.4" fill="none"/>
</g>
<!-- fillet -->
<g transform="translate(414,27)">
 <path d="M2 31v-22l6-6h10c8 0 14 6 14 14v8l-6 6z" fill="#d9d9d9" stroke="#777"/>
 <path d="M18 3c8 0 14 6 14 14l-5 3c0-7-5-12-12-12z" fill="#4d9de0"/>
</g>
<!-- shell -->
<g transform="translate(457,27)">
 <path d="M1 6l5-5h26v25l-5 5h-26z" fill="#d9d9d9" stroke="#777"/><path d="M27 6v25M1 6h26l5-5" stroke="#777" fill="none"/>
 <rect x="5" y="10" width="18" height="17" fill="#eee" stroke="#888"/><path d="M7 13h5v8h9v4h-14z" fill="#3b86c8"/><path d="M12 13h9v8h-9z" fill="#9ad0f7"/>
</g>
<!-- combine -->
<g transform="translate(499,27)">
 <path d="M12 6l5-5h14v16l-5 5h-14z" fill="#5aa7e6"/><path d="M12 6l5-5h14l-5 5z" fill="#9ad0f7"/><path d="M26 6l5-5v16l-5 5z" fill="#3b86c8"/>
 <path d="M1 16l5-5h14v16l-5 5h-14z" fill="#5aa7e6"/><path d="M1 16l5-5h14l-5 5z" fill="#9ad0f7"/><path d="M15 16l5-5v16l-5 5z" fill="#3b86c8"/>
</g>
<!-- split -->
<g transform="translate(542,27)">
 <path d="M1 6l5-5h23v12l-5 5h-23z" fill="#5aa7e6"/><path d="M1 6l5-5h23l-5 5z" fill="#9ad0f7"/><path d="M24 6l5-5v12l-5 5z" fill="#3b86c8"/>
 <path d="M0 17l32-3" stroke="#2f8fe0" stroke-width="1.5"/><path d="M0 21l32-3" stroke="#2f8fe0" stroke-width="1.5"/>
 <path d="M1 22l5-3h23v8l-5 4h-23z" fill="#ddd" stroke="#777" stroke-width="0.8"/>
</g>
<!-- move -->
<g transform="translate(585,27)">
 <path d="M16 1l-5 6h4v8h-8v-4l-6 5 6 5v-4h8v8h-4l5 6 5-6h-4v-8h8v4l6-5-6-5v4h-8v-8h4z" fill="#222"/>
</g>
<!-- assemble -->
<g transform="translate(640,27)">
 <path d="M1 16v15h10v-15z M11 16v15h10v-15z" fill="#ddd" stroke="#777"/>
 <path d="M1 6l3-3h9v11l-3 3h-9z" fill="#5aa7e6"/><path d="M1 6l3-3h9l-3 3z" fill="#9ad0f7"/>
 <path d="M22 1l2 5 5-2-2 5 5 2-5 2 2 5-5-2-2 5-2-5-5 2 2-5-5-2 5-2-2-5 5 2z" fill="#f5a011"/>
</g>
<!-- joint -->
<g transform="translate(684,27)">
 <path d="M2 8l6-7h5v14l-6 14h-5z" fill="#ddd" stroke="#777"/><path d="M18 10l5-7 7 8v18l-4-4h-8z" fill="#ddd" stroke="#777"/>
 <path d="M10 14v8M22 10v8" stroke="#2f8fe0" stroke-width="1.5"/>
</g>
<!-- construct -->
<g transform="translate(740,27)">
 <path d="M1 9l8-8h6v24l-8 6h-6z" fill="#e5e5e5" stroke="#777"/><path d="M9 9l7-8v24l-7 6z" fill="#5dbb6a"/><path d="M19 9l10-8v23l-10 7z" fill="#e08c5a"/>
</g>
<!-- measure -->
<g transform="translate(800,28)">
 <path d="M1 6v12M29 6v12M3 12h24M3 12l4-3M3 12l4 3M27 12l-4-3M27 12l-4 3" stroke="#333" fill="none" stroke-width="1.1"/>
 <rect x="1" y="18" width="29" height="6" fill="#f5a011"/><path d="M4 18v3M8 18v2M12 18v3M16 18v2M20 18v3M24 18v2" stroke="#8a5a00" stroke-width="0.7"/>
</g>
<!-- insert -->
<g transform="translate(858,27)">
 <rect x="0" y="1" width="30" height="29" fill="#8fcdf8"/><path d="M0 30v-8c5-8 9-8 14-3 4-6 9-6 16 2v9z" fill="#3f8fd0"/><circle cx="22" cy="8" r="3" fill="#f7f4d0"/>
</g>
<!-- select -->
<g transform="translate(913,24)">
 <rect x="0" y="0" width="38" height="38" fill="#0a8fd8"/>
 <rect x="4" y="3" width="27" height="22" fill="none" stroke="#7ed97e" stroke-dasharray="3 2"/>
 <path d="M24 18l0 15 4-4 3 6 3-1-3-6 5 0z" fill="#fff"/>
</g>
</svg>
<div style="position:absolute;left:12px;top:145px;width:297px;height:22px;background:#f0f0f0;border:1px solid #c8c8c8"></div>
<svg style="position:absolute;left:16px;top:151px" width="14" height="10"><path d="M6 1v8l-5-4z M12 1v8l-5-4z" fill="#333"/></svg>
<div style="position:absolute;left:37px;top:149px;font:11px 'Liberation Sans',sans-serif;color:#444">ブラウザ</div>
<svg style="position:absolute;left:289px;top:150px" width="22" height="12"><circle cx="6" cy="6" r="5" fill="#222"/><path d="M3 6h6" stroke="#fff" stroke-width="1.5"/><path d="M17 2v9M19 2v9" stroke="#777" stroke-width="0.8"/></svg>
<div style="position:absolute;left:16px;top:176px;width:7px;height:932px;background:#c8c9cc"></div>
<div style="position:absolute;left:16px;top:176px;width:7px;height:124px;background:#a9a9ab;border-radius:3px"></div>
<div style="position:absolute;left:48px;top:174px;width:139px;height:20px;background:rgba(240,240,240,0.92)"></div>
<svg style="position:absolute;left:29px;top:179px" width="13" height="12"><path d="M11 1v10h-10z" fill="#888" stroke="#222" stroke-width="1"/></svg>
<svg style="position:absolute;left:51px;top:178px" width="18" height="12"><path d="M1 6c4-6.5 12-6.5 16 0c-4 6.5-12 6.5-16 0z" fill="#a3a3a3"/><circle cx="9" cy="6" r="3.2" fill="#eeeeee"/><circle cx="9" cy="6" r="2" fill="#a3a3a3"/></svg>
<div style="position:absolute;left:73px;top:175px;width:90px;height:17px;background:#9a9a9a"></div>
<svg style="position:absolute;left:76px;top:176px" width="16" height="16"><path d="M2 5l4-3h8v10l-4 3h-8z" fill="#fff" stroke="#555"/><path d="M2 5h8l4-3M10 5v10" stroke="#555" fill="none"/></svg>
<div style="position:absolute;left:105px;top:177px;font:bold 11px 'Liberation Sans',sans-serif;color:#fff">HC-95 v1</div>
<svg style="position:absolute;left:165px;top:176px" width="16" height="16"><circle cx="8" cy="8" r="6" fill="#fff" stroke="#333" stroke-width="1.3"/><circle cx="8" cy="8" r="2.8" fill="#333"/></svg>
<svg style="position:absolute;left:48px;top:201px" width="11" height="15"><path d="M1.5 1.5l8 6-8 6z" fill="#fff" stroke="#333" stroke-width="1.4"/></svg>
<div style="position:absolute;left:66px;top:198px;width:122px;height:20px;background:rgba(240,240,240,0.92)"></div>
<svg style="position:absolute;left:69px;top:199px" width="18" height="18"><g transform="translate(9,9)" fill="#8c8c8c"><rect x="-2" y="-9" width="4" height="5" transform="rotate(0)"/><rect x="-2" y="-9" width="4" height="5" transform="rotate(45)"/><rect x="-2" y="-9" width="4" height="5" transform="rotate(90)"/><rect x="-2" y="-9" width="4" height="5" transform="rotate(135)"/><rect x="-2" y="-9" width="4" height="5" transform="rotate(180)"/><rect x="-2" y="-9" width="4" height="5" transform="rotate(225)"/><rect x="-2" y="-9" width="4" height="5" transform="rotate(270)"/><rect x="-2" y="-9" width="4" height="5" transform="rotate(315)"/><circle r="6"/></g><circle cx="9" cy="9" r="2.5" fill="#f0f0f0"/></svg>
<div style="position:absolute;left:98px;top:201px;font:11px 'Liberation Sans',sans-serif;letter-spacing:0px;color:#222;white-space:nowrap;">ドキュメントの設定</div>
<svg style="position:absolute;left:48px;top:225px" width="11" height="15"><path d="M1.5 1.5l8 6-8 6z" fill="#fff" stroke="#333" stroke-width="1.4"/></svg>
<div style="position:absolute;left:66px;top:222px;width:90px;height:20px;background:rgba(240,240,240,0.92)"></div>
<svg style="position:absolute;left:69px;top:225px" width="18" height="14"><path d="M1 2h6l2 2h8v9h-16z" fill="#8c8c8c"/><path d="M1 5h16" stroke="#a8a8a8" stroke-width="0.8"/></svg>
<div style="position:absolute;left:97px;top:225px;font:11px 'Liberation Sans',sans-serif;letter-spacing:0px;color:#222;white-space:nowrap;">ビュー管理</div>
<svg style="position:absolute;left:48px;top:249px" width="11" height="15"><path d="M1.5 1.5l8 6-8 6z" fill="#fff" stroke="#333" stroke-width="1.4"/></svg>
<div style="position:absolute;left:66px;top:246px;width:91px;height:20px;background:rgba(240,240,240,0.92)"></div>
<svg style="position:absolute;left:69px;top:250px" width="18" height="12"><path d="M1 6c4-6 12-6 16 0c-4 6-12 6-16 0z" fill="none" stroke="#a8a8a8" stroke-width="1.3"/><circle cx="9" cy="6" r="2.2" fill="none" stroke="#a8a8a8" stroke-width="1.2"/><path d="M3 11l12-10" stroke="#a8a8a8" stroke-width="1.2"/></svg>
<svg style="position:absolute;left:93px;top:249px" width="18" height="14"><path d="M1 2h6l2 2h8v9h-16z" fill="#8c8c8c"/><path d="M1 5h16" stroke="#a8a8a8" stroke-width="0.8"/></svg>
<div style="position:absolute;left:123px;top:249px;font:11px 'Liberation Sans',sans-serif;letter-spacing:0px;color:#222;white-space:nowrap;">原点</div>
<svg style="position:absolute;left:46px;top:275px" width="13" height="12"><path d="M11 1v10h-10z" fill="#888" stroke="#222" stroke-width="1"/></svg>
<div style="position:absolute;left:66px;top:270px;width:91px;height:20px;background:rgba(240,240,240,0.92)"></div>
<svg style="position:absolute;left:69px;top:274px" width="18" height="12"><path d="M1 6c4-6.5 12-6.5 16 0c-4 6.5-12 6.5-16 0z" fill="#a3a3a3"/><circle cx="9" cy="6" r="3.2" fill="#eeeeee"/><circle cx="9" cy="6" r="2" fill="#a3a3a3"/></svg>
<svg style="position:absolute;left:93px;top:273px" width="18" height="14"><path d="M1 2h6l2 2h8v9h-16z" fill="#8c8c8c"/><path d="M1 5h16" stroke="#a8a8a8" stroke-width="0.8"/></svg>
<div style="position:absolute;left:123px;top:273px;font:11px 'Liberation Sans',sans-serif;letter-spacing:0px;color:#222;white-space:nowrap;">ボディ</div>
<svg style="position:absolute;left:64px;top:299px" width="13" height="12"><path d="M11 1v10h-10z" fill="#888" stroke="#222" stroke-width="1"/></svg>
<div style="position:absolute;left:84px;top:294px;width:163px;height:20px;background:rgba(240,240,240,0.92)"></div>
<svg style="position:absolute;left:87px;top:298px" width="18" height="12"><path d="M1 6c4-6.5 12-6.5 16 0c-4 6.5-12 6.5-16 0z" fill="#a3a3a3"/><circle cx="9" cy="6" r="3.2" fill="#eeeeee"/><circle cx="9" cy="6" r="2" fill="#a3a3a3"/></svg>
<svg style="position:absolute;left:111px;top:297px" width="18" height="14"><path d="M1 2h6l2 2h8v9h-16z" fill="#8c8c8c"/><path d="M1 5h16" stroke="#a8a8a8" stroke-width="0.8"/></svg>
<div style="position:absolute;left:141px;top:297px;font:11px 'Liberation Sans',sans-serif;letter-spacing:0px;color:#222;white-space:nowrap;">キーボードグループ (6)</div>
<div style="position:absolute;left:102px;top:318px;width:138.5px;height:20px;background:rgba(240,240,240,0.92)"></div>
<svg style="position:absolute;left:105px;top:322px" width="18" height="12"><path d="M1 6c4-6.5 12-6.5 16 0c-4 6.5-12 6.5-16 0z" fill="#a3a3a3"/><circle cx="9" cy="6" r="3.2" fill="#eeeeee"/><circle cx="9" cy="6" r="2" fill="#a3a3a3"/></svg>
<svg style="position:absolute;left:130px;top:320px" width="16" height="17"><defs><linearGradient id="bd130320" x1="0" x2="1"><stop offset="0" stop-color="#fdfdfd"/><stop offset="1" stop-color="#b9bcc2"/></linearGradient></defs><rect x="1.5" y="1.5" width="13" height="14" rx="3" fill="url(#bd130320)" stroke="#555" stroke-width="1.1"/><path d="M2 4.5c3 1.5 9 1.5 12 0" stroke="#888" fill="none" stroke-width="0.8"/></svg>
<div style="position:absolute;left:159px;top:321px;font:11px 'Liberation Sans',sans-serif;letter-spacing:0px;color:#222;white-space:nowrap;">キーボード・下面</div>
<div style="position:absolute;left:102px;top:342px;width:138.5px;height:20px;background:rgba(240,240,240,0.92)"></div>
<svg style="position:absolute;left:105px;top:346px" width="18" height="12"><path d="M1 6c4-6.5 12-6.5 16 0c-4 6.5-12 6.5-16 0z" fill="#a3a3a3"/><circle cx="9" cy="6" r="3.2" fill="#eeeeee"/><circle cx="9" cy="6" r="2" fill="#a3a3a3"/></svg>
<svg style="position:absolute;left:130px;top:344px" width="16" height="17"><defs><linearGradient id="bd130344" x1="0" x2="1"><stop offset="0" stop-color="#fdfdfd"/><stop offset="1" stop-color="#b9bcc2"/></linearGradient></defs><rect x="1.5" y="1.5" width="13" height="14" rx="3" fill="url(#bd130344)" stroke="#555" stroke-width="1.1"/><path d="M2 4.5c3 1.5 9 1.5 12 0" stroke="#888" fill="none" stroke-width="0.8"/></svg>
<div style="position:absolute;left:159px;top:345px;font:11px 'Liberation Sans',sans-serif;letter-spacing:0px;color:#222;white-space:nowrap;">キーボード・上面</div>
<div style="position:absolute;left:102px;top:366px;width:110px;height:20px;background:rgba(240,240,240,0.92)"></div>
<svg style="position:absolute;left:105px;top:370px" width="18" height="12"><path d="M1 6c4-6.5 12-6.5 16 0c-4 6.5-12 6.5-16 0z" fill="#a3a3a3"/><circle cx="9" cy="6" r="3.2" fill="#eeeeee"/><circle cx="9" cy="6" r="2" fill="#a3a3a3"/></svg>
<svg style="position:absolute;left:130px;top:368px" width="16" height="17"><defs><linearGradient id="bd130368" x1="0" x2="1"><stop offset="0" stop-color="#fdfdfd"/><stop offset="1" stop-color="#b9bcc2"/></linearGradient></defs><rect x="1.5" y="1.5" width="13" height="14" rx="3" fill="url(#bd130368)" stroke="#555" stroke-width="1.1"/><path d="M2 4.5c3 1.5 9 1.5 12 0" stroke="#888" fill="none" stroke-width="0.8"/></svg>
<div style="position:absolute;left:159px;top:369px;font:11px 'Liberation Sans',sans-serif;letter-spacing:0px;color:#222;white-space:nowrap;">キーボード</div>
<div style="position:absolute;left:102px;top:390px;width:154px;height:20px;background:rgba(240,240,240,0.92)"></div>
<svg style="position:absolute;left:105px;top:394px" width="18" height="12"><path d="M1 6c4-6.5 12-6.5 16 0c-4 6.5-12 6.5-16 0z" fill="#a3a3a3"/><circle cx="9" cy="6" r="3.2" fill="#eeeeee"/><circle cx="9" cy="6" r="2" fill="#a3a3a3"/></svg>
<svg style="position:absolute;left:130px;top:392px" width="16" height="17"><defs><linearGradient id="bd130392" x1="0" x2="1"><stop offset="0" stop-color="#fdfdfd"/><stop offset="1" stop-color="#b9bcc2"/></linearGradient></defs><rect x="1.5" y="1.5" width="13" height="14" rx="3" fill="url(#bd130392)" stroke="#555" stroke-width="1.1"/><path d="M2 4.5c3 1.5 9 1.5 12 0" stroke="#888" fill="none" stroke-width="0.8"/></svg>
<div style="position:absolute;left:159px;top:393px;font:11px 'Liberation Sans',sans-serif;letter-spacing:0px;color:#222;white-space:nowrap;">キーボード・スタンド1</div>
<div style="position:absolute;left:102px;top:414px;width:157.7px;height:20px;background:rgba(240,240,240,0.92)"></div>
<svg style="position:absolute;left:105px;top:418px" width="18" height="12"><path d="M1 6c4-6.5 12-6.5 16 0c-4 6.5-12 6.5-16 0z" fill="#a3a3a3"/><circle cx="9" cy="6" r="3.2" fill="#eeeeee"/><circle cx="9" cy="6" r="2" fill="#a3a3a3"/></svg>
<svg style="position:absolute;left:130px;top:416px" width="16" height="17"><defs><linearGradient id="bd130416" x1="0" x2="1"><stop offset="0" stop-color="#fdfdfd"/><stop offset="1" stop-color="#b9bcc2"/></linearGradient></defs><rect x="1.5" y="1.5" width="13" height="14" rx="3" fill="url(#bd130416)" stroke="#555" stroke-width="1.1"/><path d="M2 4.5c3 1.5 9 1.5 12 0" stroke="#888" fill="none" stroke-width="0.8"/></svg>
<div style="position:absolute;left:159px;top:417px;font:11px 'Liberation Sans',sans-serif;letter-spacing:0px;color:#222;white-space:nowrap;">キーボード・スタンド2</div>
<div style="position:absolute;left:102px;top:438px;width:150px;height:20px;background:rgba(240,240,240,0.92)"></div>
<svg style="position:absolute;left:105px;top:442px" width="18" height="12"><path d="M1 6c4-6.5 12-6.5 16 0c-4 6.5-12 6.5-16 0z" fill="#a3a3a3"/><circle cx="9" cy="6" r="3.2" fill="#eeeeee"/><circle cx="9" cy="6" r="2" fill="#a3a3a3"/></svg>
<svg style="position:absolute;left:130px;top:440px" width="16" height="17"><defs><linearGradient id="bd130440" x1="0" x2="1"><stop offset="0" stop-color="#fdfdfd"/><stop offset="1" stop-color="#b9bcc2"/></linearGradient></defs><rect x="1.5" y="1.5" width="13" height="14" rx="3" fill="url(#bd130440)" stroke="#555" stroke-width="1.1"/><path d="M2 4.5c3 1.5 9 1.5 12 0" stroke="#888" fill="none" stroke-width="0.8"/></svg>
<div style="position:absolute;left:159px;top:441px;font:11px 'Liberation Sans',sans-serif;letter-spacing:0px;color:#222;white-space:nowrap;">キーボード・コネクタ</div>
<div style="position:absolute;left:84px;top:462px;width:146.7px;height:20px;background:rgba(240,240,240,0.92)"></div>
<svg style="position:absolute;left:87px;top:466px" width="18" height="12"><path d="M1 6c4-6.5 12-6.5 16 0c-4 6.5-12 6.5-16 0z" fill="#a3a3a3"/><circle cx="9" cy="6" r="3.2" fill="#eeeeee"/><circle cx="9" cy="6" r="2" fill="#a3a3a3"/></svg>
<svg style="position:absolute;left:112px;top:464px" width="16" height="17"><defs><linearGradient id="bd112464" x1="0" x2="1"><stop offset="0" stop-color="#fdfdfd"/><stop offset="1" stop-color="#b9bcc2"/></linearGradient></defs><rect x="1.5" y="1.5" width="13" height="14" rx="3" fill="url(#bd112464)" stroke="#555" stroke-width="1.1"/><path d="M2 4.5c3 1.5 9 1.5 12 0" stroke="#888" fill="none" stroke-width="0.8"/></svg>
<div style="position:absolute;left:141px;top:465px;font:11px 'Liberation Sans',sans-serif;letter-spacing:0px;color:#222;white-space:nowrap;">カートリッジ・蓋 (1)</div>
<div style="position:absolute;left:84px;top:486px;width:170.6px;height:20px;background:rgba(240,240,240,0.92)"></div>
<svg style="position:absolute;left:87px;top:490px" width="18" height="12"><path d="M1 6c4-6.5 12-6.5 16 0c-4 6.5-12 6.5-16 0z" fill="#a3a3a3"/><circle cx="9" cy="6" r="3.2" fill="#eeeeee"/><circle cx="9" cy="6" r="2" fill="#a3a3a3"/></svg>
<svg style="position:absolute;left:112px;top:488px" width="16" height="17"><defs><linearGradient id="bd112488" x1="0" x2="1"><stop offset="0" stop-color="#fdfdfd"/><stop offset="1" stop-color="#b9bcc2"/></linearGradient></defs><rect x="1.5" y="1.5" width="13" height="14" rx="3" fill="url(#bd112488)" stroke="#555" stroke-width="1.1"/><path d="M2 4.5c3 1.5 9 1.5 12 0" stroke="#888" fill="none" stroke-width="0.8"/></svg>
<div style="position:absolute;left:141px;top:489px;font:11px 'Liberation Sans',sans-serif;letter-spacing:0px;color:#222;white-space:nowrap;">ジョイスティックポート (1)</div>
<div style="position:absolute;left:84px;top:510px;width:127px;height:20px;background:rgba(240,240,240,0.92)"></div>
<svg style="position:absolute;left:87px;top:514px" width="18" height="12"><path d="M1 6c4-6.5 12-6.5 16 0c-4 6.5-12 6.5-16 0z" fill="#a3a3a3"/><circle cx="9" cy="6" r="3.2" fill="#eeeeee"/><circle cx="9" cy="6" r="2" fill="#a3a3a3"/></svg>
<svg style="position:absolute;left:112px;top:512px" width="16" height="17"><defs><linearGradient id="bd112512" x1="0" x2="1"><stop offset="0" stop-color="#fdfdfd"/><stop offset="1" stop-color="#b9bcc2"/></linearGradient></defs><rect x="1.5" y="1.5" width="13" height="14" rx="3" fill="url(#bd112512)" stroke="#555" stroke-width="1.1"/><path d="M2 4.5c3 1.5 9 1.5 12 0" stroke="#888" fill="none" stroke-width="0.8"/></svg>
<div style="position:absolute;left:141px;top:513px;font:11px 'Liberation Sans',sans-serif;letter-spacing:0px;color:#222;white-space:nowrap;">ボタン・クロック</div>
<div style="position:absolute;left:84px;top:534px;width:127px;height:20px;background:rgba(240,240,240,0.92)"></div>
<svg style="position:absolute;left:87px;top:538px" width="18" height="12"><path d="M1 6c4-6.5 12-6.5 16 0c-4 6.5-12 6.5-16 0z" fill="#a3a3a3"/><circle cx="9" cy="6" r="3.2" fill="#eeeeee"/><circle cx="9" cy="6" r="2" fill="#a3a3a3"/></svg>
<svg style="position:absolute;left:112px;top:536px" width="16" height="17"><defs><linearGradient id="bd112536" x1="0" x2="1"><stop offset="0" stop-color="#fdfdfd"/><stop offset="1" stop-color="#b9bcc2"/></linearGradient></defs><rect x="1.5" y="1.5" width="13" height="14" rx="3" fill="url(#bd112536)" stroke="#555" stroke-width="1.1"/><path d="M2 4.5c3 1.5 9 1.5 12 0" stroke="#888" fill="none" stroke-width="0.8"/></svg>
<div style="position:absolute;left:141px;top:537px;font:11px 'Liberation Sans',sans-serif;letter-spacing:0px;color:#222;white-space:nowrap;">ボタン・リセット</div>
<div style="position:absolute;left:84px;top:558px;width:111px;height:20px;background:rgba(240,240,240,0.92)"></div>
<svg style="position:absolute;left:87px;top:562px" width="18" height="12"><path d="M1 6c4-6.5 12-6.5 16 0c-4 6.5-12 6.5-16 0z" fill="#a3a3a3"/><circle cx="9" cy="6" r="3.2" fill="#eeeeee"/><circle cx="9" cy="6" r="2" fill="#a3a3a3"/></svg>
<svg style="position:absolute;left:112px;top:560px" width="16" height="17"><defs><linearGradient id="bd112560" x1="0" x2="1"><stop offset="0" stop-color="#fdfdfd"/><stop offset="1" stop-color="#b9bcc2"/></linearGradient></defs><rect x="1.5" y="1.5" width="13" height="14" rx="3" fill="url(#bd112560)" stroke="#555" stroke-width="1.1"/><path d="M2 4.5c3 1.5 9 1.5 12 0" stroke="#888" fill="none" stroke-width="0.8"/></svg>
<div style="position:absolute;left:141px;top:561px;font:11px 'Liberation Sans',sans-serif;letter-spacing:0px;color:#222;white-space:nowrap;">ボリウム・3</div>
<div style="position:absolute;left:84px;top:582px;width:111px;height:20px;background:rgba(240,240,240,0.92)"></div>
<svg style="position:absolute;left:87px;top:586px" width="18" height="12"><path d="M1 6c4-6.5 12-6.5 16 0c-4 6.5-12 6.5-16 0z" fill="#a3a3a3"/><circle cx="9" cy="6" r="3.2" fill="#eeeeee"/><circle cx="9" cy="6" r="2" fill="#a3a3a3"/></svg>
<svg style="position:absolute;left:112px;top:584px" width="16" height="17"><defs><linearGradient id="bd112584" x1="0" x2="1"><stop offset="0" stop-color="#fdfdfd"/><stop offset="1" stop-color="#b9bcc2"/></linearGradient></defs><rect x="1.5" y="1.5" width="13" height="14" rx="3" fill="url(#bd112584)" stroke="#555" stroke-width="1.1"/><path d="M2 4.5c3 1.5 9 1.5 12 0" stroke="#888" fill="none" stroke-width="0.8"/></svg>
<div style="position:absolute;left:141px;top:585px;font:11px 'Liberation Sans',sans-serif;letter-spacing:0px;color:#222;white-space:nowrap;">電源LED</div>
<div style="position:absolute;left:84px;top:606px;width:118.7px;height:20px;background:rgba(240,240,240,0.92)"></div>
<svg style="position:absolute;left:87px;top:610px" width="18" height="12"><path d="M1 6c4-6.5 12-6.5 16 0c-4 6.5-12 6.5-16 0z" fill="#a3a3a3"/><circle cx="9" cy="6" r="3.2" fill="#eeeeee"/><circle cx="9" cy="6" r="2" fill="#a3a3a3"/></svg>
<svg style="position:absolute;left:112px;top:608px" width="16" height="17"><defs><linearGradient id="bd112608" x1="0" x2="1"><stop offset="0" stop-color="#fdfdfd"/><stop offset="1" stop-color="#b9bcc2"/></linearGradient></defs><rect x="1.5" y="1.5" width="13" height="14" rx="3" fill="url(#bd112608)" stroke="#555" stroke-width="1.1"/><path d="M2 4.5c3 1.5 9 1.5 12 0" stroke="#888" fill="none" stroke-width="0.8"/></svg>
<div style="position:absolute;left:141px;top:609px;font:11px 'Liberation Sans',sans-serif;letter-spacing:0px;color:#222;white-space:nowrap;">電源スイッチ</div>
<div style="position:absolute;left:84px;top:630px;width:98.6px;height:20px;background:rgba(240,240,240,0.92)"></div>
<svg style="position:absolute;left:87px;top:634px" width="18" height="12"><path d="M1 6c4-6.5 12-6.5 16 0c-4 6.5-12 6.5-16 0z" fill="#a3a3a3"/><circle cx="9" cy="6" r="3.2" fill="#eeeeee"/><circle cx="9" cy="6" r="2" fill="#a3a3a3"/></svg>
<svg style="position:absolute;left:112px;top:632px" width="16" height="17"><defs><linearGradient id="bd112632" x1="0" x2="1"><stop offset="0" stop-color="#fdfdfd"/><stop offset="1" stop-color="#b9bcc2"/></linearGradient></defs><rect x="1.5" y="1.5" width="13" height="14" rx="3" fill="url(#bd112632)" stroke="#555" stroke-width="1.1"/><path d="M2 4.5c3 1.5 9 1.5 12 0" stroke="#888" fill="none" stroke-width="0.8"/></svg>
<div style="position:absolute;left:141px;top:633px;font:11px 'Liberation Sans',sans-serif;letter-spacing:0px;color:#222;white-space:nowrap;">FDD・2</div>
<div style="position:absolute;left:84px;top:654px;width:170.6px;height:20px;background:rgba(240,240,240,0.92)"></div>
<svg style="position:absolute;left:87px;top:658px" width="18" height="12"><path d="M1 6c4-6.5 12-6.5 16 0c-4 6.5-12 6.5-16 0z" fill="#a3a3a3"/><circle cx="9" cy="6" r="3.2" fill="#eeeeee"/><circle cx="9" cy="6" r="2" fill="#a3a3a3"/></svg>
<svg style="position:absolute;left:112px;top:656px" width="16" height="17"><defs><linearGradient id="bd112656" x1="0" x2="1"><stop offset="0" stop-color="#fdfdfd"/><stop offset="1" stop-color="#b9bcc2"/></linearGradient></defs><rect x="1.5" y="1.5" width="13" height="14" rx="3" fill="url(#bd112656)" stroke="#555" stroke-width="1.1"/><path d="M2 4.5c3 1.5 9 1.5 12 0" stroke="#888" fill="none" stroke-width="0.8"/></svg>
<div style="position:absolute;left:141px;top:657px;font:11px 'Liberation Sans',sans-serif;letter-spacing:0px;color:#222;white-space:nowrap;">FDD・2・イジェクトボタン</div>
<div style="position:absolute;left:84px;top:678px;width:127px;height:20px;background:rgba(240,240,240,0.92)"></div>
<svg style="position:absolute;left:87px;top:682px" width="18" height="12"><path d="M1 6c4-6.5 12-6.5 16 0c-4 6.5-12 6.5-16 0z" fill="#a3a3a3"/><circle cx="9" cy="6" r="3.2" fill="#eeeeee"/><circle cx="9" cy="6" r="2" fill="#a3a3a3"/></svg>
<svg style="position:absolute;left:112px;top:680px" width="16" height="17"><defs><linearGradient id="bd112680" x1="0" x2="1"><stop offset="0" stop-color="#fdfdfd"/><stop offset="1" stop-color="#b9bcc2"/></linearGradient></defs><rect x="1.5" y="1.5" width="13" height="14" rx="3" fill="url(#bd112680)" stroke="#555" stroke-width="1.1"/><path d="M2 4.5c3 1.5 9 1.5 12 0" stroke="#888" fill="none" stroke-width="0.8"/></svg>
<div style="position:absolute;left:141px;top:681px;font:11px 'Liberation Sans',sans-serif;letter-spacing:0px;color:#222;white-space:nowrap;">FDD・2・LED</div>
<div style="position:absolute;left:84px;top:702px;width:98.6px;height:20px;background:rgba(240,240,240,0.92)"></div>
<svg style="position:absolute;left:87px;top:706px" width="18" height="12"><path d="M1 6c4-6.5 12-6.5 16 0c-4 6.5-12 6.5-16 0z" fill="#a3a3a3"/><circle cx="9" cy="6" r="3.2" fill="#eeeeee"/><circle cx="9" cy="6" r="2" fill="#a3a3a3"/></svg>
<svg style="position:absolute;left:112px;top:704px" width="16" height="17"><defs><linearGradient id="bd112704" x1="0" x2="1"><stop offset="0" stop-color="#fdfdfd"/><stop offset="1" stop-color="#b9bcc2"/></linearGradient></defs><rect x="1.5" y="1.5" width="13" height="14" rx="3" fill="url(#bd112704)" stroke="#555" stroke-width="1.1"/><path d="M2 4.5c3 1.5 9 1.5 12 0" stroke="#888" fill="none" stroke-width="0.8"/></svg>
<div style="position:absolute;left:141px;top:705px;font:11px 'Liberation Sans',sans-serif;letter-spacing:0px;color:#222;white-space:nowrap;">FDD・1</div>
<div style="position:absolute;left:84px;top:726px;width:170.6px;height:20px;background:rgba(240,240,240,0.92)"></div>
<svg style="position:absolute;left:87px;top:730px" width="18" height="12"><path d="M1 6c4-6.5 12-6.5 16 0c-4 6.5-12 6.5-16 0z" fill="#a3a3a3"/><circle cx="9" cy="6" r="3.2" fill="#eeeeee"/><circle cx="9" cy="6" r="2" fill="#a3a3a3"/></svg>
<svg style="position:absolute;left:112px;top:728px" width="16" height="17"><defs><linearGradient id="bd112728" x1="0" x2="1"><stop offset="0" stop-color="#fdfdfd"/><stop offset="1" stop-color="#b9bcc2"/></linearGradient></defs><rect x="1.5" y="1.5" width="13" height="14" rx="3" fill="url(#bd112728)" stroke="#555" stroke-width="1.1"/><path d="M2 4.5c3 1.5 9 1.5 12 0" stroke="#888" fill="none" stroke-width="0.8"/></svg>
<div style="position:absolute;left:141px;top:729px;font:11px 'Liberation Sans',sans-serif;letter-spacing:0px;color:#222;white-space:nowrap;">FDD・1・イジェクトボタン</div>
<div style="position:absolute;left:84px;top:750px;width:127px;height:20px;background:rgba(240,240,240,0.92)"></div>
<svg style="position:absolute;left:87px;top:754px" width="18" height="12"><path d="M1 6c4-6.5 12-6.5 16 0c-4 6.5-12 6.5-16 0z" fill="#a3a3a3"/><circle cx="9" cy="6" r="3.2" fill="#eeeeee"/><circle cx="9" cy="6" r="2" fill="#a3a3a3"/></svg>
<svg style="position:absolute;left:112px;top:752px" width="16" height="17"><defs><linearGradient id="bd112752" x1="0" x2="1"><stop offset="0" stop-color="#fdfdfd"/><stop offset="1" stop-color="#b9bcc2"/></linearGradient></defs><rect x="1.5" y="1.5" width="13" height="14" rx="3" fill="url(#bd112752)" stroke="#555" stroke-width="1.1"/><path d="M2 4.5c3 1.5 9 1.5 12 0" stroke="#888" fill="none" stroke-width="0.8"/></svg>
<div style="position:absolute;left:141px;top:753px;font:11px 'Liberation Sans',sans-serif;letter-spacing:0px;color:#222;white-space:nowrap;">FDD・1・LED</div>
<div style="position:absolute;left:84px;top:774px;width:127px;height:20px;background:rgba(240,240,240,0.92)"></div>
<svg style="position:absolute;left:87px;top:778px" width="18" height="12"><path d="M1 6c4-6.5 12-6.5 16 0c-4 6.5-12 6.5-16 0z" fill="#a3a3a3"/><circle cx="9" cy="6" r="3.2" fill="#eeeeee"/><circle cx="9" cy="6" r="2" fill="#a3a3a3"/></svg>
<svg style="position:absolute;left:112px;top:776px" width="16" height="17"><defs><linearGradient id="bd112776" x1="0" x2="1"><stop offset="0" stop-color="#fdfdfd"/><stop offset="1" stop-color="#b9bcc2"/></linearGradient></defs><rect x="1.5" y="1.5" width="13" height="14" rx="3" fill="url(#bd112776)" stroke="#555" stroke-width="1.1"/><path d="M2 4.5c3 1.5 9 1.5 12 0" stroke="#888" fill="none" stroke-width="0.8"/></svg>
<div style="position:absolute;left:141px;top:777px;font:11px 'Liberation Sans',sans-serif;letter-spacing:0px;color:#222;white-space:nowrap;">フロントパネル</div>
<div style="position:absolute;left:84px;top:798px;width:110.4px;height:20px;background:rgba(240,240,240,0.92)"></div>
<svg style="position:absolute;left:87px;top:802px" width="18" height="12"><path d="M1 6c4-6.5 12-6.5 16 0c-4 6.5-12 6.5-16 0z" fill="#a3a3a3"/><circle cx="9" cy="6" r="3.2" fill="#eeeeee"/><circle cx="9" cy="6" r="2" fill="#a3a3a3"/></svg>
<svg style="position:absolute;left:112px;top:800px" width="16" height="17"><defs><linearGradient id="bd112800" x1="0" x2="1"><stop offset="0" stop-color="#fdfdfd"/><stop offset="1" stop-color="#b9bcc2"/></linearGradient></defs><rect x="1.5" y="1.5" width="13" height="14" rx="3" fill="url(#bd112800)" stroke="#555" stroke-width="1.1"/><path d="M2 4.5c3 1.5 9 1.5 12 0" stroke="#888" fill="none" stroke-width="0.8"/></svg>
<div style="position:absolute;left:141px;top:801px;font:11px 'Liberation Sans',sans-serif;letter-spacing:0px;color:#222;white-space:nowrap;">ボリウム・2</div>
<div style="position:absolute;left:84px;top:822px;width:110.4px;height:20px;background:rgba(240,240,240,0.92)"></div>
<svg style="position:absolute;left:87px;top:826px" width="18" height="12"><path d="M1 6c4-6.5 12-6.5 16 0c-4 6.5-12 6.5-16 0z" fill="#a3a3a3"/><circle cx="9" cy="6" r="3.2" fill="#eeeeee"/><circle cx="9" cy="6" r="2" fill="#a3a3a3"/></svg>
<svg style="position:absolute;left:112px;top:824px" width="16" height="17"><defs><linearGradient id="bd112824" x1="0" x2="1"><stop offset="0" stop-color="#fdfdfd"/><stop offset="1" stop-color="#b9bcc2"/></linearGradient></defs><rect x="1.5" y="1.5" width="13" height="14" rx="3" fill="url(#bd112824)" stroke="#555" stroke-width="1.1"/><path d="M2 4.5c3 1.5 9 1.5 12 0" stroke="#888" fill="none" stroke-width="0.8"/></svg>
<div style="position:absolute;left:141px;top:825px;font:11px 'Liberation Sans',sans-serif;letter-spacing:0px;color:#222;white-space:nowrap;">ボリウム・1</div>
<div style="position:absolute;left:84px;top:846px;width:122.4px;height:20px;background:rgba(240,240,240,0.92)"></div>
<svg style="position:absolute;left:87px;top:850px" width="18" height="12"><path d="M1 6c4-6.5 12-6.5 16 0c-4 6.5-12 6.5-16 0z" fill="#a3a3a3"/><circle cx="9" cy="6" r="3.2" fill="#eeeeee"/><circle cx="9" cy="6" r="2" fill="#a3a3a3"/></svg>
<svg style="position:absolute;left:112px;top:848px" width="16" height="17"><defs><linearGradient id="bd112848" x1="0" x2="1"><stop offset="0" stop-color="#fdfdfd"/><stop offset="1" stop-color="#b9bcc2"/></linearGradient></defs><rect x="1.5" y="1.5" width="13" height="14" rx="3" fill="url(#bd112848)" stroke="#555" stroke-width="1.1"/><path d="M2 4.5c3 1.5 9 1.5 12 0" stroke="#888" fill="none" stroke-width="0.8"/></svg>
<div style="position:absolute;left:141px;top:849px;font:11px 'Liberation Sans',sans-serif;letter-spacing:0px;color:#222;white-space:nowrap;">内部フレーム</div>
<div style="position:absolute;left:84px;top:870px;width:115px;height:20px;background:rgba(240,240,240,0.92)"></div>
<svg style="position:absolute;left:87px;top:874px" width="18" height="12"><path d="M1 6c4-6.5 12-6.5 16 0c-4 6.5-12 6.5-16 0z" fill="#a3a3a3"/><circle cx="9" cy="6" r="3.2" fill="#eeeeee"/><circle cx="9" cy="6" r="2" fill="#a3a3a3"/></svg>
<svg style="position:absolute;left:112px;top:872px" width="16" height="17"><defs><linearGradient id="bd112872" x1="0" x2="1"><stop offset="0" stop-color="#fdfdfd"/><stop offset="1" stop-color="#b9bcc2"/></linearGradient></defs><rect x="1.5" y="1.5" width="13" height="14" rx="3" fill="url(#bd112872)" stroke="#555" stroke-width="1.1"/><path d="M2 4.5c3 1.5 9 1.5 12 0" stroke="#888" fill="none" stroke-width="0.8"/></svg>
<div style="position:absolute;left:141px;top:873px;font:11px 'Liberation Sans',sans-serif;letter-spacing:0px;color:#222;white-space:nowrap;">背面パネル</div>
<div style="position:absolute;left:84px;top:894px;width:106.8px;height:20px;background:rgba(240,240,240,0.92)"></div>
<svg style="position:absolute;left:87px;top:898px" width="18" height="12"><path d="M1 6c4-6.5 12-6.5 16 0c-4 6.5-12 6.5-16 0z" fill="#a3a3a3"/><circle cx="9" cy="6" r="3.2" fill="#eeeeee"/><circle cx="9" cy="6" r="2" fill="#a3a3a3"/></svg>
<svg style="position:absolute;left:112px;top:896px" width="16" height="17"><defs><linearGradient id="bd112896" x1="0" x2="1"><stop offset="0" stop-color="#fdfdfd"/><stop offset="1" stop-color="#b9bcc2"/></linearGradient></defs><rect x="1.5" y="1.5" width="13" height="14" rx="3" fill="url(#bd112896)" stroke="#555" stroke-width="1.1"/><path d="M2 4.5c3 1.5 9 1.5 12 0" stroke="#888" fill="none" stroke-width="0.8"/></svg>
<div style="position:absolute;left:141px;top:897px;font:11px 'Liberation Sans',sans-serif;letter-spacing:0px;color:#222;white-space:nowrap;">ボディ・底</div>
<div style="position:absolute;left:84px;top:918px;width:106.8px;height:20px;background:rgba(240,240,240,0.92)"></div>
<svg style="position:absolute;left:87px;top:922px" width="18" height="12"><path d="M1 6c4-6.5 12-6.5 16 0c-4 6.5-12 6.5-16 0z" fill="#a3a3a3"/><circle cx="9" cy="6" r="3.2" fill="#eeeeee"/><circle cx="9" cy="6" r="2" fill="#a3a3a3"/></svg>
<svg style="position:absolute;left:112px;top:920px" width="16" height="17"><defs><linearGradient id="bd112920" x1="0" x2="1"><stop offset="0" stop-color="#fdfdfd"/><stop offset="1" stop-color="#b9bcc2"/></linearGradient></defs><rect x="1.5" y="1.5" width="13" height="14" rx="3" fill="url(#bd112920)" stroke="#555" stroke-width="1.1"/><path d="M2 4.5c3 1.5 9 1.5 12 0" stroke="#888" fill="none" stroke-width="0.8"/></svg>
<div style="position:absolute;left:141px;top:921px;font:11px 'Liberation Sans',sans-serif;letter-spacing:0px;color:#222;white-space:nowrap;">ボディ・上</div>
<div style="position:absolute;left:84px;top:942px;width:106.8px;height:20px;background:rgba(240,240,240,0.92)"></div>
<svg style="position:absolute;left:87px;top:946px" width="18" height="12"><path d="M1 6c4-6.5 12-6.5 16 0c-4 6.5-12 6.5-16 0z" fill="#a3a3a3"/><circle cx="9" cy="6" r="3.2" fill="#eeeeee"/><circle cx="9" cy="6" r="2" fill="#a3a3a3"/></svg>
<svg style="position:absolute;left:112px;top:944px" width="16" height="17"><defs><linearGradient id="bd112944" x1="0" x2="1"><stop offset="0" stop-color="#fdfdfd"/><stop offset="1" stop-color="#b9bcc2"/></linearGradient></defs><rect x="1.5" y="1.5" width="13" height="14" rx="3" fill="url(#bd112944)" stroke="#555" stroke-width="1.1"/><path d="M2 4.5c3 1.5 9 1.5 12 0" stroke="#888" fill="none" stroke-width="0.8"/></svg>
<div style="position:absolute;left:141px;top:945px;font:11px 'Liberation Sans',sans-serif;letter-spacing:0px;color:#222;white-space:nowrap;">ボディ・左</div>
<div style="position:absolute;left:84px;top:966px;width:106.8px;height:20px;background:rgba(240,240,240,0.92)"></div>
<svg style="position:absolute;left:87px;top:970px" width="18" height="12"><path d="M1 6c4-6.5 12-6.5 16 0c-4 6.5-12 6.5-16 0z" fill="#a3a3a3"/><circle cx="9" cy="6" r="3.2" fill="#eeeeee"/><circle cx="9" cy="6" r="2" fill="#a3a3a3"/></svg>
<svg style="position:absolute;left:112px;top:968px" width="16" height="17"><defs><linearGradient id="bd112968" x1="0" x2="1"><stop offset="0" stop-color="#fdfdfd"/><stop offset="1" stop-color="#b9bcc2"/></linearGradient></defs><rect x="1.5" y="1.5" width="13" height="14" rx="3" fill="url(#bd112968)" stroke="#555" stroke-width="1.1"/><path d="M2 4.5c3 1.5 9 1.5 12 0" stroke="#888" fill="none" stroke-width="0.8"/></svg>
<div style="position:absolute;left:141px;top:969px;font:11px 'Liberation Sans',sans-serif;letter-spacing:0px;color:#222;white-space:nowrap;">ボディ・右</div>
<svg style="position:absolute;left:48px;top:993px" width="11" height="15"><path d="M1.5 1.5l8 6-8 6z" fill="#fff" stroke="#333" stroke-width="1.4"/></svg>
<div style="position:absolute;left:66px;top:990px;width:110.4px;height:20px;background:rgba(240,240,240,0.92)"></div>
<svg style="position:absolute;left:69px;top:994px" width="18" height="12"><path d="M1 6c4-6.5 12-6.5 16 0c-4 6.5-12 6.5-16 0z" fill="#a3a3a3"/><circle cx="9" cy="6" r="3.2" fill="#eeeeee"/><circle cx="9" cy="6" r="2" fill="#a3a3a3"/></svg>
<svg style="position:absolute;left:93px;top:993px" width="18" height="14"><path d="M1 2h6l2 2h8v9h-16z" fill="#8c8c8c"/><path d="M1 5h16" stroke="#a8a8a8" stroke-width="0.8"/></svg>
<div style="position:absolute;left:123px;top:993px;font:11px 'Liberation Sans',sans-serif;letter-spacing:0px;color:#222;white-space:nowrap;">キャンバス</div>
<svg style="position:absolute;left:48px;top:1017px" width="11" height="15"><path d="M1.5 1.5l8 6-8 6z" fill="#fff" stroke="#333" stroke-width="1.4"/></svg>
<div style="position:absolute;left:66px;top:1014px;width:98.4px;height:20px;background:rgba(240,240,240,0.92)"></div>
<svg style="position:absolute;left:69px;top:1018px" width="18" height="12"><path d="M1 6c4-6.5 12-6.5 16 0c-4 6.5-12 6.5-16 0z" fill="#a3a3a3"/><circle cx="9" cy="6" r="3.2" fill="#eeeeee"/><circle cx="9" cy="6" r="2" fill="#a3a3a3"/></svg>
<svg style="position:absolute;left:93px;top:1017px" width="18" height="14"><path d="M1 2h6l2 2h8v9h-16z" fill="#8c8c8c"/><path d="M1 5h16" stroke="#a8a8a8" stroke-width="0.8"/></svg>
<div style="position:absolute;left:123px;top:1017px;font:11px 'Liberation Sans',sans-serif;letter-spacing:0px;color:#222;white-space:nowrap;">スケッチ</div>
<svg style="position:absolute;left:48px;top:1041px" width="11" height="15"><path d="M1.5 1.5l8 6-8 6z" fill="#fff" stroke="#333" stroke-width="1.4"/></svg>
<div style="position:absolute;left:66px;top:1038px;width:138.9px;height:20px;background:rgba(240,240,240,0.92)"></div>
<svg style="position:absolute;left:69px;top:1042px" width="18" height="12"><path d="M1 6c4-6.5 12-6.5 16 0c-4 6.5-12 6.5-16 0z" fill="#a3a3a3"/><circle cx="9" cy="6" r="3.2" fill="#eeeeee"/><circle cx="9" cy="6" r="2" fill="#a3a3a3"/></svg>
<svg style="position:absolute;left:93px;top:1041px" width="18" height="14"><path d="M1 2h6l2 2h8v9h-16z" fill="#8c8c8c"/><path d="M1 5h16" stroke="#a8a8a8" stroke-width="0.8"/></svg>
<div style="position:absolute;left:123px;top:1041px;font:11px 'Liberation Sans',sans-serif;letter-spacing:0px;color:#222;white-space:nowrap;">コンストラクション</div>
<div style="position:absolute;left:66px;top:1062px;width:105.9px;height:20px;background:rgba(240,240,240,0.92)"></div>
<svg style="position:absolute;left:68px;top:1063px" width="18" height="18"><path d="M1 4l3-3h8v11l-3 3h-8z" fill="#5aa7e6"/><path d="M1 4l3-3h8l-3 3z" fill="#9ad0f7"/><path d="M9 4l3-3v11l-3 3z" fill="#3b86c8"/><path d="M1 15h8l3-3v2l-3 3h-8z" fill="#bbb"/><path d="M15 16v-14M13 4l2-3 2 3" stroke="#222" stroke-width="1" fill="none"/></svg>
<div style="position:absolute;left:98px;top:1065px;font:11px 'Liberation Sans',sans-serif;letter-spacing:0px;color:#222;white-space:nowrap;">押し出し3498</div>
<div style="position:absolute;left:66px;top:1086px;width:101.4px;height:20px;background:rgba(240,240,240,0.92)"></div>
<svg style="position:absolute;left:68px;top:1087px" width="18" height="18"><path d="M1 4l3-3h8v11l-3 3h-8z" fill="#5aa7e6"/><path d="M1 4l3-3h8l-3 3z" fill="#9ad0f7"/><path d="M9 4l3-3v11l-3 3z" fill="#3b86c8"/><path d="M1 15h8l3-3v2l-3 3h-8z" fill="#bbb"/><path d="M15 16v-14M13 4l2-3 2 3" stroke="#222" stroke-width="1" fill="none"/></svg>
<div style="position:absolute;left:98px;top:1089px;font:11px 'Liberation Sans',sans-serif;letter-spacing:0px;color:#222;white-space:nowrap;">押し出し3501</div>
<div style="position:absolute;left:12px;top:1131px;width:297px;height:22px;background:#f0f0f0;border:1px solid #c8c8c8"></div>
<div style="position:absolute;left:35px;top:1135px;font:11px 'Liberation Sans',sans-serif;color:#444">コメント</div>
<svg style="position:absolute;left:289px;top:1136px" width="22" height="12"><circle cx="6" cy="6" r="5" fill="#222"/><path d="M3 6h6M6 3v6" stroke="#fff" stroke-width="1.5"/><path d="M17 2v9M19 2v9" stroke="#777" stroke-width="0.8"/></svg>
<div style="position:absolute;left:849px;top:1132px;width:237px;height:24px;background:rgba(240,240,240,0.95)"></div>
<svg style="position:absolute;left:830px;top:1120px" width="270" height="40">
 <g transform="translate(0,1)"><g stroke="#333" fill="none" stroke-width="1.2">
  <path d="M31 31V13M28 16l3-3 3 3"/><path d="M35 20c5 1 5 6 0 7c-5 1-11 0-12-3"/><path d="M23 24l3 2-3 2"/>
  <path d="M56 18h15v13h-15z"/><path d="M59 22h9v5h-9z" fill="#aaa"/><path d="M57 18l3-3 3 2 3-2 3 1"/>
  <path d="M84 25c-2-2-4-3-3-4s3 0 4 2v-7c0-1.5 2-1.5 2 0v5M87 21v-6c0-1.5 2-1.5 2 0v6M89 21v-5c0-1.5 2-1.5 2 0v5M91 21v-3c0-1.5 2-1.5 2 0v6c0 4-2 7-5 7h-1c-2 0-3-1-4-3" stroke-width="1"/>
  <circle cx="115" cy="21" r="5" fill="#dfeeee"/><path d="M119 25l3 3" stroke-width="2.5"/><path d="M120 15h5M122.5 12.5v5M120 19h5"/>
  <rect x="133" y="14" width="17" height="17" stroke-dasharray="2 1.5"/><circle cx="141" cy="21" r="6" fill="#dfeeee"/><path d="M145 26l3 3" stroke-width="2.5"/>
  <path d="M168 15h16v12h-16zM173 31h6M176 27v4"/>
  <path d="M198 16h16v16h-16zM198 20h16M198 24h16M198 28h16M202 16v16M206 16v16M210 16v16" stroke="#555" stroke-width="1"/>
  <path d="M228 17h7v6h-7zM237 17h7v6h-7zM228 25h7v6h-7zM237 25h7v6h-7z" stroke="#3050a0"/>
 </g>
 <rect x="170" y="17" width="12" height="8" fill="#8fb3e0"/>
 <g fill="#8fb0e8"><rect x="230" y="19" width="3" height="2"/><rect x="239" y="19" width="3" height="2"/><rect x="230" y="27" width="3" height="2"/><rect x="239" y="27" width="3" height="2"/></g>
 <g fill="#333"><path d="M43 22h6l-3 3.5z"/><path d="M154 22h6l-3 3.5z"/><path d="M187 22h6l-3 3.5z"/><path d="M217 22h6l-3 3.5z"/><path d="M249 22h6l-3 3.5z"/></g></g>
</svg>
<svg style="position:absolute;left:1800px;top:150px" width="128" height="120">
 <defs><linearGradient id="ncf" x1="0" x2="0" y1="0" y2="1"><stop offset="0" stop-color="#f2f2f2"/><stop offset="1" stop-color="#e0e0e0"/></linearGradient>
 <filter id="ncs" x="-50%" y="-100%" width="200%" height="300%"><feGaussianBlur stdDeviation="4"/></filter></defs>
 <ellipse cx="66" cy="85" rx="36" ry="9" fill="#bbb" opacity="0.6" filter="url(#ncs)"/>
 <path d="M61.6 21L29.8 31.8L67.8 44.2L98.6 29.8z" fill="#f3f3f3" stroke="#aaa" stroke-dasharray="2.5 2" stroke-width="0.8"/>
 <path d="M29.8 31.8L67.8 44.2V91.4L31.8 76z" fill="url(#ncf)" stroke="#aaa" stroke-dasharray="2.5 2" stroke-width="0.8"/>
 <path d="M67.8 44.2L98.6 29.8L95.5 71.9L67.8 91.4z" fill="#e9e9e9" stroke="#aaa" stroke-dasharray="2.5 2" stroke-width="0.8"/>
 <text x="38" y="72" font-size="21" fill="#8a8c90" font-family="Liberation Sans">前</text>
 <text x="74" y="68" font-size="19" fill="#8a8c90" font-family="Liberation Sans" transform="skewY(-20) translate(0,28)">右</text>
 <text x="58" y="37" font-size="11" fill="#999" font-family="Liberation Sans" transform="skewX(-30) translate(20,0)">上</text>
 <path d="M31.8 76L27.7 24" stroke="#5a5aee" stroke-width="1.6"/><text x="23" y="22" font-size="11" fill="#6a6aee" font-family="Liberation Sans">Z</text>
 <path d="M31.8 76L75 96.5" stroke="#ee8a8a" stroke-width="1.8"/><text x="77" y="105" font-size="11" fill="#f07878" font-family="Liberation Sans">X</text>
</svg>
<div style="position:absolute;left:0;top:1160px;width:1928px;height:8px;background:#111"></div>
<div style="position:absolute;left:56px;top:1161px;width:344px;height:7px;background:#f0f0f0"></div>
<div style="position:absolute;left:697px;top:1161px;width:48px;height:7px;background:#3a3a3a"></div>
<div style="position:absolute;left:0;top:1040px;width:8px;height:120px;background:#111"></div>
<div style="position:absolute;left:0;top:34px;width:8px;height:1006px;background:#f0f0f0"></div><div style="position:absolute;left:0;top:34px;width:8px;height:26px;background:#fff"></div>
<div style="position:absolute;left:0;top:82px;width:6px;height:303px;background:#bdbdbd"></div>
</body></html>
